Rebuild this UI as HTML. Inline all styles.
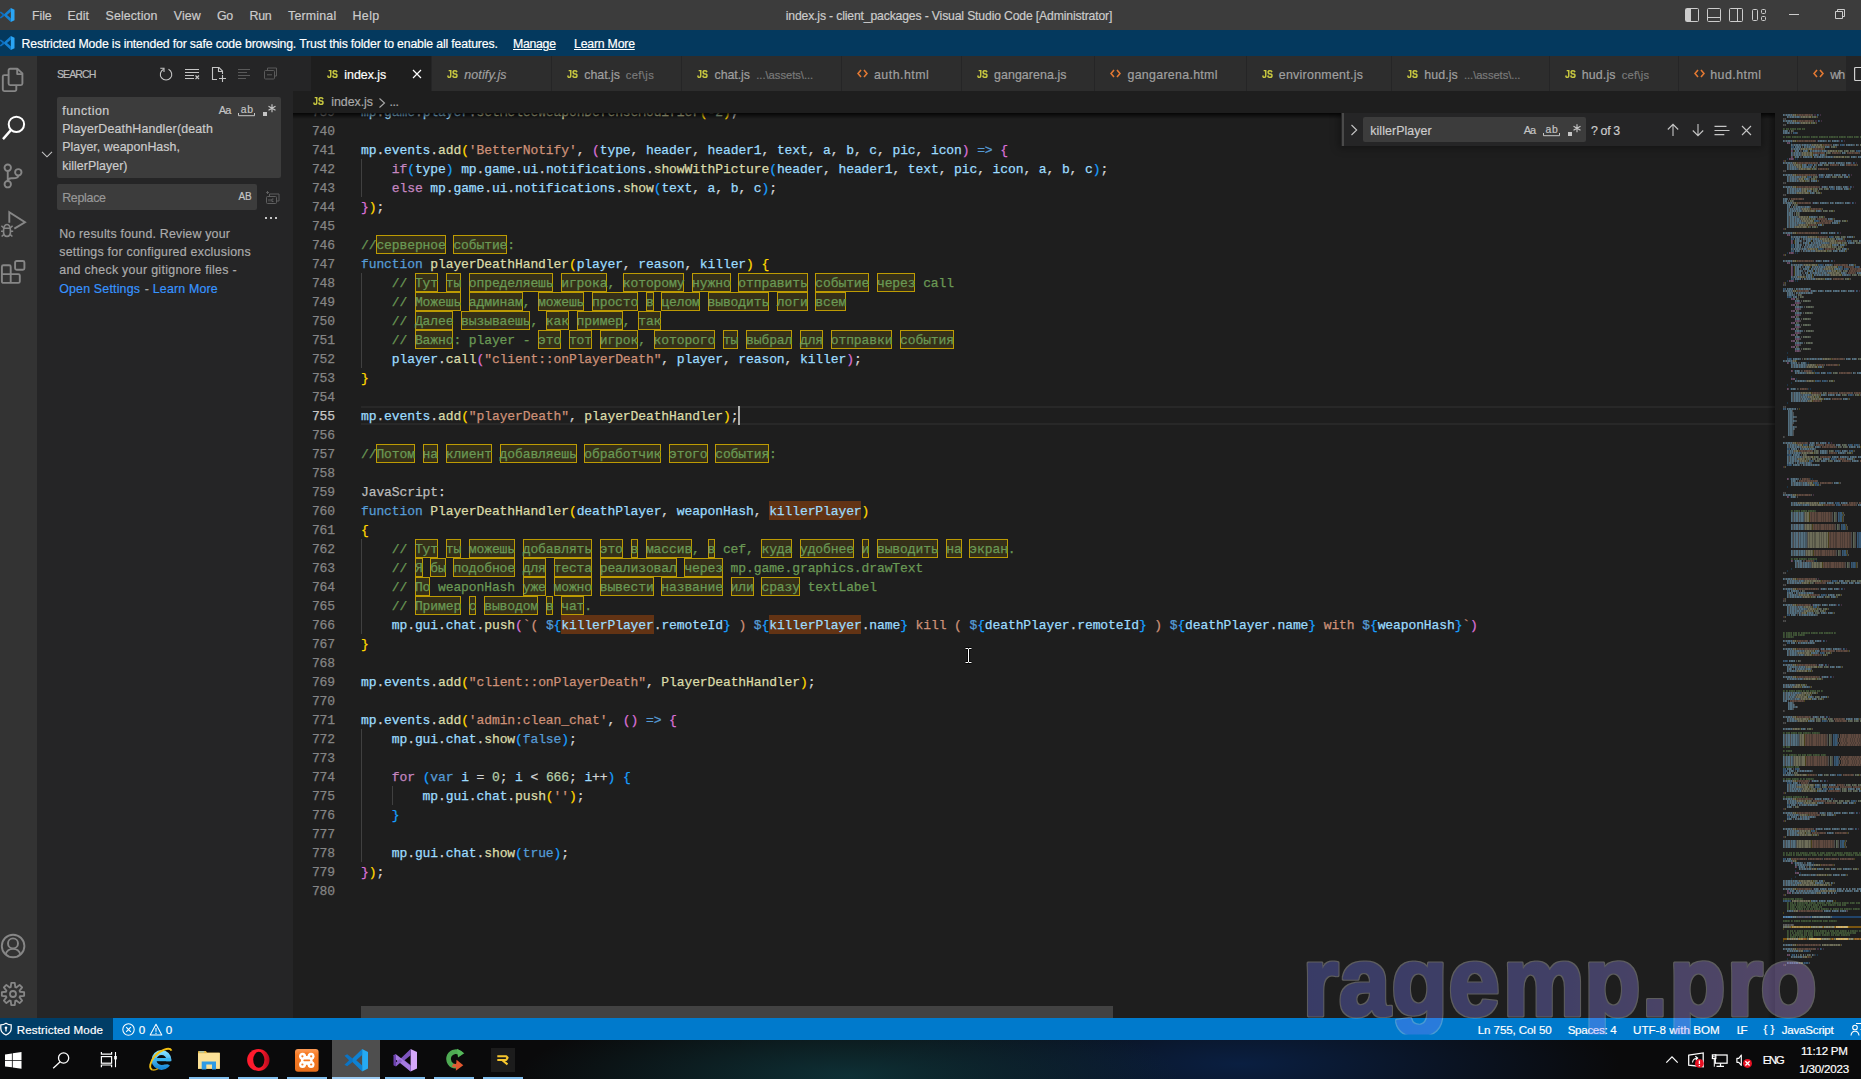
<!DOCTYPE html>
<html lang="en"><head><meta charset="utf-8"><title>index.js - client_packages - Visual Studio Code [Administrator]</title>
<style>
html,body{margin:0;padding:0;background:#1e1e1e;overflow:hidden;}
#root{position:relative;width:1861px;height:1079px;overflow:hidden;background:#1e1e1e;font-family:"Liberation Sans",sans-serif;}
.r{position:absolute;display:block;}
.t{position:absolute;white-space:pre;font-family:"Liberation Sans",sans-serif;-webkit-text-stroke:0.18px;}
.m{font-family:"Liberation Mono",monospace;}
.ln{position:absolute;left:0;height:19px;line-height:21px;-webkit-text-stroke:0.25px;white-space:pre;font-family:"Liberation Mono",monospace;font-size:13px;letter-spacing:-0.101px;color:#d4d4d4;}
.ln span{display:inline-block;height:19px;vertical-align:top;}
.u{box-sizing:border-box;border:1px solid #bd9b03;background:rgba(189,155,3,.15);margin:0 -1px;padding:0;}
.h{background:#623314;}
</style></head>
<body><div id="root">
<div class="r" style="left:0px;top:0px;width:1861px;height:30px;background:#3c3c3c;"></div>
<div class="r" style="left:0px;top:30px;width:1861px;height:26px;background:#04395e;"></div>
<div class="r" style="left:0px;top:56px;width:37px;height:962px;background:#333333;"></div>
<div class="r" style="left:37px;top:56px;width:256px;height:962px;background:#252526;"></div>
<div class="r" style="left:293px;top:56px;width:1568px;height:35px;background:#252526;"></div>
<div class="r" style="left:293px;top:91px;width:1568px;height:927px;background:#1e1e1e;"></div>
<div class="r" style="left:0px;top:1018px;width:1861px;height:22px;background:#007acc;"></div>
<div class="r" style="left:0px;top:1040px;width:1861px;height:39px;background:#0a0a0b;background:radial-gradient(ellipse 330px 70px at 850px 36px,rgba(14,50,56,.95),rgba(14,50,56,0) 100%),radial-gradient(ellipse 380px 80px at 1240px 24px,rgba(10,32,68,.95),rgba(10,32,68,0) 100%),#0a0a0b;"></div>
<svg class="r" style="left:-1px;top:7px;" width="16" height="16" viewBox="0 0 100 100"><path d="M74 6 L97 17 L97 83 L74 94 Z" fill="#2aa5f5"/><path d="M74 6 L27 50 L74 94 L74 70 L50 50 L74 30 Z" fill="#1480d3"/><path d="M33 44 L12 28 L3 33 L22 50 L3 67 L12 72 L33 56 Z" fill="#0f6fc0"/></svg>
<span class="t" style="left:32.00px;top:8px;font-size:12.4px;line-height:16px;color:#cccccc;letter-spacing:-0.077px;">File</span>
<span class="t" style="left:67.50px;top:8px;font-size:12.4px;line-height:16px;color:#cccccc;letter-spacing:0.044px;">Edit</span>
<span class="t" style="left:105.50px;top:8px;font-size:12.4px;line-height:16px;color:#cccccc;letter-spacing:0.124px;">Selection</span>
<span class="t" style="left:173.75px;top:8px;font-size:12.4px;line-height:16px;color:#cccccc;letter-spacing:0.116px;">View</span>
<span class="t" style="left:217.00px;top:8px;font-size:12.4px;line-height:16px;color:#cccccc;letter-spacing:-0.291px;">Go</span>
<span class="t" style="left:249.50px;top:8px;font-size:12.4px;line-height:16px;color:#cccccc;letter-spacing:-0.249px;">Run</span>
<span class="t" style="left:288.00px;top:8px;font-size:12.4px;line-height:16px;color:#cccccc;letter-spacing:0.199px;">Terminal</span>
<span class="t" style="left:352.50px;top:8px;font-size:12.4px;line-height:16px;color:#cccccc;letter-spacing:0.416px;">Help</span>
<span class="t" style="left:785.70px;top:8px;font-size:12.2px;line-height:16px;color:#cccccc;letter-spacing:-0.147px;">index.js - client_packages - Visual Studio Code [Administrator]</span>
<svg class="r" style="left:1684px;top:7px;" width="16" height="16" viewBox="0 0 16 16"><rect x="1.5" y="1.5" width="13" height="13" rx="1" fill="none" stroke="#cccccc" stroke-width="1"/><rect x="2" y="2" width="5" height="12" fill="#cccccc"/></svg>
<svg class="r" style="left:1705.5px;top:7px;" width="16" height="16" viewBox="0 0 16 16"><rect x="1.5" y="1.5" width="13" height="13" rx="1" fill="none" stroke="#cccccc" stroke-width="1"/><path d="M2 10.5H14" stroke="#cccccc" stroke-width="1"/></svg>
<svg class="r" style="left:1727.5px;top:7px;" width="16" height="16" viewBox="0 0 16 16"><rect x="1.5" y="1.5" width="13" height="13" rx="1" fill="none" stroke="#cccccc" stroke-width="1"/><path d="M9.5 2V14" stroke="#cccccc" stroke-width="1"/></svg>
<svg class="r" style="left:1750.5px;top:7px;" width="16" height="16" viewBox="0 0 16 16"><rect x="1.5" y="2.5" width="5" height="11" rx="1" fill="none" stroke="#cccccc" stroke-width="1"/><rect x="10.5" y="2.5" width="4" height="4" rx="1" fill="none" stroke="#cccccc" stroke-width="1"/><rect x="10.5" y="9.5" width="4" height="4" rx="1" fill="none" stroke="#cccccc" stroke-width="1"/></svg>
<div class="r" style="left:1789px;top:14px;width:10px;height:1px;background:#cccccc;"></div>
<svg class="r" style="left:1834px;top:8px;" width="12" height="12" viewBox="0 0 12 12"><path d="M1.5 3.5h7v7h-7z M3.5 3.5v-2h7v7h-2" fill="none" stroke="#cccccc" stroke-width="1"/></svg>
<svg class="r" style="left:-1px;top:35px;" width="16" height="16" viewBox="0 0 100 100"><path d="M74 6 L97 17 L97 83 L74 94 Z" fill="#2aa5f5"/><path d="M74 6 L27 50 L74 94 L74 70 L50 50 L74 30 Z" fill="#1480d3"/><path d="M33 44 L12 28 L3 33 L22 50 L3 67 L12 72 L33 56 Z" fill="#0f6fc0"/></svg>
<span class="t" style="left:21.50px;top:36px;font-size:12.3px;line-height:16px;color:#ffffff;letter-spacing:-0.164px;">Restricted Mode is intended for safe code browsing. Trust this folder to enable all features.</span>
<span class="t" style="left:513.00px;top:36px;font-size:12.3px;line-height:16px;color:#ffffff;letter-spacing:-0.290px;text-decoration:underline;text-underline-offset:1px;">Manage</span>
<span class="t" style="left:574.00px;top:36px;font-size:12.3px;line-height:16px;color:#ffffff;letter-spacing:-0.211px;text-decoration:underline;text-underline-offset:1px;">Learn More</span>
<div class="r" style="left:311px;top:56px;width:120px;height:35px;background:#1e1e1e;"></div>
<span class="t" style="left:326.70px;top:67px;font-size:11px;line-height:14px;color:#cbcb41;font-weight:700;transform:scaleX(0.810);transform-origin:0 50%;">JS</span>
<span class="t" style="left:344.25px;top:67px;font-size:12.4px;line-height:16px;color:#ffffff;letter-spacing:-0.006px;">index.js</span>
<div class="r" style="left:432px;top:56px;width:119px;height:35px;background:#2d2d2d;"></div>
<span class="t" style="left:446.70px;top:67px;font-size:11px;line-height:14px;color:#cbcb41;font-weight:700;transform:scaleX(0.810);transform-origin:0 50%;">JS</span>
<span class="t" style="left:464.25px;top:67px;font-size:12.4px;line-height:16px;color:#a0a0a0;letter-spacing:0.142px;font-style:italic;">notify.js</span>
<div class="r" style="left:552px;top:56px;width:129px;height:35px;background:#2d2d2d;"></div>
<span class="t" style="left:566.70px;top:67px;font-size:11px;line-height:14px;color:#cbcb41;font-weight:700;transform:scaleX(0.810);transform-origin:0 50%;">JS</span>
<span class="t" style="left:584.25px;top:67px;font-size:12.4px;line-height:16px;color:#a0a0a0;letter-spacing:-0.015px;">chat.js</span>
<span class="t" style="left:625.75px;top:68px;font-size:11.2px;line-height:15px;color:#7b7b7b;letter-spacing:0.372px;">cef\js</span>
<div class="r" style="left:682px;top:56px;width:159px;height:35px;background:#2d2d2d;"></div>
<span class="t" style="left:696.70px;top:67px;font-size:11px;line-height:14px;color:#cbcb41;font-weight:700;transform:scaleX(0.810);transform-origin:0 50%;">JS</span>
<span class="t" style="left:714.50px;top:67px;font-size:12.4px;line-height:16px;color:#a0a0a0;letter-spacing:-0.056px;">chat.js</span>
<span class="t" style="left:756.25px;top:68px;font-size:11.2px;line-height:15px;color:#7b7b7b;letter-spacing:-0.020px;">...\assets\...</span>
<div class="r" style="left:842px;top:56px;width:119px;height:35px;background:#2d2d2d;"></div>
<svg class="r" style="left:857.0px;top:69.0px;" width="11" height="9" viewBox="0 0 11 9"><path d="M4 1 L1 4.5 L4 8 M7 1 L10 4.5 L7 8" fill="none" stroke="#e37933" stroke-width="1.6"/></svg>
<span class="t" style="left:874.00px;top:67px;font-size:12.4px;line-height:16px;color:#a0a0a0;letter-spacing:0.468px;">auth.html</span>
<div class="r" style="left:962px;top:56px;width:132px;height:35px;background:#2d2d2d;"></div>
<span class="t" style="left:977.20px;top:67px;font-size:11px;line-height:14px;color:#cbcb41;font-weight:700;transform:scaleX(0.810);transform-origin:0 50%;">JS</span>
<span class="t" style="left:994.00px;top:67px;font-size:12.4px;line-height:16px;color:#a0a0a0;letter-spacing:0.073px;">gangarena.js</span>
<div class="r" style="left:1095px;top:56px;width:151px;height:35px;background:#2d2d2d;"></div>
<svg class="r" style="left:1110.0px;top:69.0px;" width="11" height="9" viewBox="0 0 11 9"><path d="M4 1 L1 4.5 L4 8 M7 1 L10 4.5 L7 8" fill="none" stroke="#e37933" stroke-width="1.6"/></svg>
<span class="t" style="left:1127.50px;top:67px;font-size:12.4px;line-height:16px;color:#a0a0a0;letter-spacing:0.295px;">gangarena.html</span>
<div class="r" style="left:1247px;top:56px;width:144px;height:35px;background:#2d2d2d;"></div>
<span class="t" style="left:1262.20px;top:67px;font-size:11px;line-height:14px;color:#cbcb41;font-weight:700;transform:scaleX(0.810);transform-origin:0 50%;">JS</span>
<span class="t" style="left:1278.75px;top:67px;font-size:12.4px;line-height:16px;color:#a0a0a0;letter-spacing:0.278px;">environment.js</span>
<div class="r" style="left:1392px;top:56px;width:157px;height:35px;background:#2d2d2d;"></div>
<span class="t" style="left:1407.20px;top:67px;font-size:11px;line-height:14px;color:#cbcb41;font-weight:700;transform:scaleX(0.810);transform-origin:0 50%;">JS</span>
<span class="t" style="left:1424.25px;top:67px;font-size:12.4px;line-height:16px;color:#a0a0a0;letter-spacing:0.082px;">hud.js</span>
<span class="t" style="left:1464.00px;top:68px;font-size:11.2px;line-height:15px;color:#7b7b7b;letter-spacing:-0.059px;">...\assets\...</span>
<div class="r" style="left:1550px;top:56px;width:128px;height:35px;background:#2d2d2d;"></div>
<span class="t" style="left:1565.20px;top:67px;font-size:11px;line-height:14px;color:#cbcb41;font-weight:700;transform:scaleX(0.810);transform-origin:0 50%;">JS</span>
<span class="t" style="left:1581.75px;top:67px;font-size:12.4px;line-height:16px;color:#a0a0a0;letter-spacing:0.132px;">hud.js</span>
<span class="t" style="left:1621.75px;top:68px;font-size:11.2px;line-height:15px;color:#7b7b7b;letter-spacing:0.222px;">cef\js</span>
<div class="r" style="left:1679px;top:56px;width:118px;height:35px;background:#2d2d2d;"></div>
<svg class="r" style="left:1693.5px;top:69.0px;" width="11" height="9" viewBox="0 0 11 9"><path d="M4 1 L1 4.5 L4 8 M7 1 L10 4.5 L7 8" fill="none" stroke="#e37933" stroke-width="1.6"/></svg>
<span class="t" style="left:1710.25px;top:67px;font-size:12.4px;line-height:16px;color:#a0a0a0;letter-spacing:0.456px;">hud.html</span>
<div class="r" style="left:1798px;top:56px;width:63px;height:35px;background:#2d2d2d;"></div>
<svg class="r" style="left:1813.0px;top:69.0px;" width="11" height="9" viewBox="0 0 11 9"><path d="M4 1 L1 4.5 L4 8 M7 1 L10 4.5 L7 8" fill="none" stroke="#e37933" stroke-width="1.6"/></svg>
<span class="t" style="left:1830.25px;top:67px;font-size:12.4px;line-height:16px;color:#a0a0a0;letter-spacing:-0.851px;">wh</span>
<svg class="r" style="left:412.2px;top:69.2px;" width="10" height="10" viewBox="0 0 10 10"><path d="M1 1 L9 9 M9 1 L1 9" stroke="#ffffff" stroke-width="1.2" fill="none"/></svg>
<div class="r" style="left:1845.5px;top:56px;width:16px;height:35px;background:#252526;"></div>
<svg class="r" style="left:1854px;top:66px;" width="8" height="16" viewBox="0 0 8 16"><rect x="0.6" y="1.5" width="12" height="13" rx="1" fill="none" stroke="#d0d0d0" stroke-width="1.2"/></svg>
<span class="t" style="left:313.45px;top:94px;font-size:11px;line-height:14px;color:#cbcb41;font-weight:700;transform:scaleX(0.810);transform-origin:0 50%;">JS</span>
<span class="t" style="left:331.25px;top:94px;font-size:12.4px;line-height:16px;color:#a9a9a9;letter-spacing:-0.042px;">index.js</span>
<svg class="r" style="left:378px;top:97px;" width="8" height="12" viewBox="0 0 8 12"><path d="M1.5 1.5 L6.5 6 L1.5 10.5" fill="none" stroke="#a9a9a9" stroke-width="1.1"/></svg>
<span class="t" style="left:389.50px;top:94px;font-size:12.4px;line-height:16px;color:#a9a9a9;letter-spacing:-0.418px;">...</span>
<svg class="r" style="left:1px;top:68px;overflow:visible;" width="26" height="26" viewBox="0 0 26 26"><g fill="none" stroke="#868686" stroke-width="1.9" stroke-linejoin="round"><path d="M7.600 6.500V2.300a1.500 1.500 0 0 1 1.500-1.500H16.300L21.400 5.400V15.600a1.500 1.500 0 0 1-1.500 1.500H9.100a1.500 1.500 0 0 1-1.500-1.500V6.500"/><path d="M16.200 .8V6.100H21.400"/><path d="M7.600 7.100H3.300a1.500 1.500 0 0 0-1.500 1.500V21.600a1.500 1.500 0 0 0 1.500 1.500H13.800a1.500 1.500 0 0 0 1.500-1.500V17.100"/></g></svg>
<svg class="r" style="left:1px;top:116px;overflow:visible;" width="26" height="26" viewBox="0 0 26 26"><g fill="none" stroke="#ffffff" stroke-width="1.9" stroke-linejoin="round"><circle cx="15.400" cy="8.350" r="7.700" stroke-width="2"/><path d="M10.100 13.900L2 23.100" stroke-width="2.400"/></g></svg>
<svg class="r" style="left:1px;top:164px;overflow:visible;" width="26" height="26" viewBox="0 0 26 26"><g fill="none" stroke="#868686" stroke-width="1.9" stroke-linejoin="round"><circle cx="6.750" cy="3.700" r="3.200"/><circle cx="6.750" cy="20.200" r="3.200"/><circle cx="17.300" cy="8.300" r="3.200"/><path d="M6.750 6.900V17"/><path d="M17.300 11.500C17.300 14.300 14.500 14.300 12 14.300H10.500C8.500 14.300 6.750 15.300 6.750 17"/></g></svg>
<svg class="r" style="left:1px;top:212px;overflow:visible;" width="26" height="26" viewBox="0 0 26 26"><g fill="none" stroke="#868686" stroke-width="1.9" stroke-linejoin="round"><path d="M8.300 10.700V.300L24 10.200L13.300 16.600" stroke-linejoin="miter"/><path d="M2.500 19.500c0-4.500 1.300-7 3.500-7s3.500 2.500 3.500 7c0 3-1.500 4.900-3.500 4.900s-3.500-1.900-3.500-4.900z" stroke-width="1.700"/><path d="M2.700 16.300H9.300 M2.500 15.800L.400 13.700 M9.500 15.800L11.600 13.700 M2.400 19.200H0 M9.600 19.200H12.200 M3 22.300L.600 24.500 M9 22.300L11.400 24.500" stroke-width="1.600"/></g></svg>
<svg class="r" style="left:1px;top:260px;overflow:visible;" width="26" height="26" viewBox="0 0 26 26"><g fill="none" stroke="#868686" stroke-width="1.9" stroke-linejoin="round"><rect x="14.100" y="1" width="9.300" height="8.700" rx="1.500"/><path d="M.900 6.700a1.500 1.500 0 0 1 1.500-1.500H8.200a1.500 1.500 0 0 1 1.500 1.500V14.100H17.300a1.500 1.500 0 0 1 1.500 1.500V21.400a1.500 1.500 0 0 1-1.500 1.500H2.400a1.500 1.500 0 0 1-1.500-1.500z"/><path d="M.900 14.100H9.700V22.900"/></g></svg>
<svg class="r" style="left:1px;top:934px;overflow:visible;" width="26" height="26" viewBox="0 0 26 26"><g fill="none" stroke="#868686" stroke-width="1.9" stroke-linejoin="round"><circle cx="12.100" cy="12" r="11.300"/><circle cx="12" cy="9.400" r="5"/><path d="M4.600 20.300C5.600 17 8.300 14.900 12 14.900s6.400 2.100 7.400 5.400"/></g></svg>
<svg class="r" style="left:1px;top:982px;overflow:visible;" width="26" height="26" viewBox="0 0 26 26"><g fill="none" stroke="#868686" stroke-width="1.9" stroke-linejoin="round"><path d="M23.16 10.23 L23.16 13.77 L18.94 14.26 L18.50 15.31 L21.14 18.64 L18.64 21.14 L15.31 18.50 L14.26 18.94 L13.77 23.16 L10.23 23.16 L9.74 18.94 L8.69 18.50 L5.36 21.14 L2.86 18.64 L5.50 15.31 L5.06 14.26 L0.84 13.77 L0.84 10.23 L5.06 9.74 L5.50 8.69 L2.86 5.36 L5.36 2.86 L8.69 5.50 L9.74 5.06 L10.23 0.84 L13.77 0.84 L14.26 5.06 L15.31 5.50 L18.64 2.86 L21.14 5.36 L18.50 8.69 L18.94 9.74Z" stroke-width="1.800"/><circle cx="12" cy="12" r="3" stroke-width="1.800"/></g></svg>
<span class="t" style="left:57.00px;top:67px;font-size:10.6px;line-height:14px;color:#bbbbbb;letter-spacing:-0.955px;">SEARCH</span>
<svg class="r" style="left:158px;top:66px;" width="16" height="16" viewBox="0 0 16 16"><g fill="none" stroke="#c5c5c5" stroke-width="1.1"><path d="M5.600 3.200A5.700 5.700 0 1 0 10.500 3.200"/><path d="M2.300 2.200h3.700v3.700"/></g></svg>
<svg class="r" style="left:184px;top:66px;" width="16" height="16" viewBox="0 0 16 16"><g fill="none" stroke="#c5c5c5" stroke-width="1.1"><path d="M1 3.500h14 M1 6.500h14 M1 9.500h9 M1 12.500h9"/><path d="M11.500 9.500l3.500 3.500 M15 9.500l-3.500 3.500"/></g></svg>
<svg class="r" style="left:211px;top:66px;" width="16" height="16" viewBox="0 0 16 16"><g fill="none" stroke="#c5c5c5" stroke-width="1.1"><path d="M6 13.500H1.500V1.500h6.500l3.500 3.500v3"/><path d="M7.500 1.500v4h4"/><path d="M11.500 9v7 M8 12.500h7"/></g></svg>
<svg class="r" style="left:237px;top:66px;" width="16" height="16" viewBox="0 0 16 16"><g fill="none" stroke="#5a5a5a" stroke-width="1"><path d="M1 3.500h12 M1 6.500h9 M1 9.500h12 M1 12.500h8"/></g></svg>
<svg class="r" style="left:263px;top:66px;" width="16" height="16" viewBox="0 0 16 16"><g fill="none" stroke="#5a5a5a" stroke-width="1"><path d="M4.500 4.500v-2.500h9v8h-2.500"/><rect x="1.500" y="4.500" width="10" height="8.500" rx="1"/><path d="M4 8.800h5"/></g></svg>
<div class="r" style="left:57px;top:97px;width:224px;height:81px;background:#3c3c3c;border-radius:2px;"></div>
<span class="t" style="left:62.20px;top:103px;font-size:12.4px;line-height:16px;color:#cccccc;letter-spacing:0.524px;">function</span>
<span class="t" style="left:62.20px;top:121px;font-size:12.4px;line-height:16px;color:#cccccc;letter-spacing:0.173px;">PlayerDeathHandler(death</span>
<span class="t" style="left:62.20px;top:139px;font-size:12.4px;line-height:16px;color:#cccccc;letter-spacing:0.034px;">Player, weaponHash,</span>
<span class="t" style="left:62.20px;top:158px;font-size:12.4px;line-height:16px;color:#cccccc;letter-spacing:0.044px;">killerPlayer)</span>
<span class="t" style="left:218.80px;top:103px;font-size:11px;line-height:14px;color:#c5c5c5;letter-spacing:-0.955px;">Aa</span>
<span class="t" style="left:240.70px;top:103px;font-size:10.4px;line-height:14px;color:#c5c5c5;letter-spacing:0.732px;">ab</span>
<svg class="r" style="left:238.10000000000002px;top:112.8px;" width="18" height="4" viewBox="0 0 18 4"><path d="M.5 0v2.700h16v-2.700" fill="none" stroke="#c5c5c5" stroke-width="1"/></svg>
<div class="r" style="left:262.7px;top:112px;width:4.5px;height:4px;background:#c5c5c5;"></div>
<svg class="r" style="left:267.6px;top:103.8px;" width="8" height="9" viewBox="0 0 8 9"><path d="M4 .3v8 M.5 2.300l7 4 M7.500 2.300l-7 4" fill="none" stroke="#c5c5c5" stroke-width="1.150"/></svg>
<svg class="r" style="left:41px;top:150px;" width="12" height="9" viewBox="0 0 12 9"><path d="M1 1.800 L6 6.800 L11 1.800" fill="none" stroke="#c5c5c5" stroke-width="1.1"/></svg>
<div class="r" style="left:57px;top:184px;width:200px;height:26px;background:#3c3c3c;border-radius:2px;"></div>
<span class="t" style="left:62.20px;top:190px;font-size:12.4px;line-height:16px;color:#989898;letter-spacing:-0.283px;">Replace</span>
<span class="t" style="left:238.60px;top:190px;font-size:10px;line-height:13px;color:#c5c5c5;letter-spacing:-0.340px;">AB</span>
<svg class="r" style="left:265px;top:189px;" width="16" height="16" viewBox="0 0 16 16"><g fill="none" stroke="#5f5f5f" stroke-width="1"><rect x="1.500" y="7.500" width="10" height="7" rx="1"/><path d="M4.500 7.500v-2.500h9.500v7h-2.500"/><path d="M4 3.500h-2.500 M3 2l-1.500 1.500 1.500 1.500"/><path d="M4 10v2.500 M6 10v2.500 M8.500 10h-1.500v2.500h1.500"/></g></svg>
<div class="r" style="left:264.5px;top:217px;width:2.2px;height:2.2px;background:#c5c5c5;"></div>
<div class="r" style="left:269.5px;top:217px;width:2.2px;height:2.2px;background:#c5c5c5;"></div>
<div class="r" style="left:274.5px;top:217px;width:2.2px;height:2.2px;background:#c5c5c5;"></div>
<span class="t" style="left:59.20px;top:226px;font-size:12.4px;line-height:16px;color:#ababab;letter-spacing:0.193px;">No results found. Review your</span>
<span class="t" style="left:59.20px;top:244px;font-size:12.4px;line-height:16px;color:#ababab;letter-spacing:0.250px;">settings for configured exclusions</span>
<span class="t" style="left:59.20px;top:262px;font-size:12.4px;line-height:16px;color:#ababab;letter-spacing:0.301px;">and check your gitignore files -</span>
<span class="t" style="left:59.20px;top:281px;font-size:12.4px;line-height:16px;color:#3794ff;letter-spacing:0.185px;">Open Settings</span>
<span class="t" style="left:144.70px;top:281px;font-size:12.4px;line-height:16px;color:#ababab;">-</span>
<span class="t" style="left:152.80px;top:281px;font-size:12.4px;line-height:16px;color:#3794ff;letter-spacing:0.177px;">Learn More</span>
<div class="r" id="ed" style="left:293px;top:113px;width:1482px;height:905px;overflow:hidden;">
<div class="r" style="left:68px;top:293px;width:1414px;height:19px;box-sizing:border-box;border-top:2px solid #282828;border-bottom:2px solid #282828;"></div>
<div class="r" style="left:68.0px;top:46px;width:1px;height:38px;background:#404040;"></div>
<div class="r" style="left:68.0px;top:160px;width:1px;height:95px;background:#404040;"></div>
<div class="r" style="left:68.0px;top:426px;width:1px;height:95px;background:#404040;"></div>
<div class="r" style="left:68.0px;top:616px;width:1px;height:133px;background:#404040;"></div>
<div class="r" style="left:98.8px;top:673px;width:1px;height:19px;background:#404040;"></div>
<span class="ln" style="left:18.90px;top:-11px;color:#858585">739</span>
<div class="ln" style="left:68px;top:-11px;"><span style="color:#9cdcfe">mp</span>.<span style="color:#9cdcfe">game</span>.<span style="color:#9cdcfe">player</span>.<span style="color:#dcdcaa">setMeleeWeaponDefenseModifier</span><span style="color:#ffd700">(</span>-<span style="color:#b5cea8">2</span><span style="color:#ffd700">)</span>;</div>
<span class="ln" style="left:18.90px;top:8px;color:#858585">740</span>
<span class="ln" style="left:18.90px;top:27px;color:#858585">741</span>
<div class="ln" style="left:68px;top:27px;"><span style="color:#9cdcfe">mp</span>.<span style="color:#9cdcfe">events</span>.<span style="color:#dcdcaa">add</span><span style="color:#ffd700">(</span><span style="color:#ce9178">'BetterNotify'</span>, <span style="color:#da70d6">(</span><span style="color:#9cdcfe">type</span>, <span style="color:#9cdcfe">header</span>, <span style="color:#9cdcfe">header1</span>, <span style="color:#9cdcfe">text</span>, <span style="color:#9cdcfe">a</span>, <span style="color:#9cdcfe">b</span>, <span style="color:#9cdcfe">c</span>, <span style="color:#9cdcfe">pic</span>, <span style="color:#9cdcfe">icon</span><span style="color:#da70d6">)</span> <span style="color:#569cd6">=&gt;</span> <span style="color:#da70d6">{</span></div>
<span class="ln" style="left:18.90px;top:46px;color:#858585">742</span>
<div class="ln" style="left:68px;top:46px;">    <span style="color:#c586c0">if</span><span style="color:#179fff">(</span><span style="color:#9cdcfe">type</span><span style="color:#179fff">)</span> <span style="color:#9cdcfe">mp</span>.<span style="color:#9cdcfe">game</span>.<span style="color:#9cdcfe">ui</span>.<span style="color:#9cdcfe">notifications</span>.<span style="color:#dcdcaa">showWithPicture</span><span style="color:#179fff">(</span><span style="color:#9cdcfe">header</span>, <span style="color:#9cdcfe">header1</span>, <span style="color:#9cdcfe">text</span>, <span style="color:#9cdcfe">pic</span>, <span style="color:#9cdcfe">icon</span>, <span style="color:#9cdcfe">a</span>, <span style="color:#9cdcfe">b</span>, <span style="color:#9cdcfe">c</span><span style="color:#179fff">)</span>;</div>
<span class="ln" style="left:18.90px;top:65px;color:#858585">743</span>
<div class="ln" style="left:68px;top:65px;">    <span style="color:#c586c0">else</span> <span style="color:#9cdcfe">mp</span>.<span style="color:#9cdcfe">game</span>.<span style="color:#9cdcfe">ui</span>.<span style="color:#9cdcfe">notifications</span>.<span style="color:#dcdcaa">show</span><span style="color:#179fff">(</span><span style="color:#9cdcfe">text</span>, <span style="color:#9cdcfe">a</span>, <span style="color:#9cdcfe">b</span>, <span style="color:#9cdcfe">c</span><span style="color:#179fff">)</span>;</div>
<span class="ln" style="left:18.90px;top:84px;color:#858585">744</span>
<div class="ln" style="left:68px;top:84px;"><span style="color:#da70d6">}</span><span style="color:#ffd700">)</span>;</div>
<span class="ln" style="left:18.90px;top:103px;color:#858585">745</span>
<span class="ln" style="left:18.90px;top:122px;color:#858585">746</span>
<div class="r u" style="left:83.40px;top:122px;width:69.30px;height:19px;margin:0"></div>
<div class="r u" style="left:160.40px;top:122px;width:53.90px;height:19px;margin:0"></div>
<div class="ln" style="left:68px;top:122px;"><span style="color:#6a9955">//серверное событие:</span></div>
<span class="ln" style="left:18.90px;top:141px;color:#858585">747</span>
<div class="ln" style="left:68px;top:141px;"><span style="color:#569cd6">function</span> <span style="color:#dcdcaa">playerDeathHandler</span><span style="color:#ffd700">(</span><span style="color:#9cdcfe">player</span>, <span style="color:#9cdcfe">reason</span>, <span style="color:#9cdcfe">killer</span><span style="color:#ffd700">)</span> <span style="color:#ffd700">{</span></div>
<span class="ln" style="left:18.90px;top:160px;color:#858585">748</span>
<div class="r u" style="left:121.90px;top:160px;width:23.10px;height:19px;margin:0"></div>
<div class="r u" style="left:152.70px;top:160px;width:15.40px;height:19px;margin:0"></div>
<div class="r u" style="left:175.80px;top:160px;width:84.70px;height:19px;margin:0"></div>
<div class="r u" style="left:268.20px;top:160px;width:46.20px;height:19px;margin:0"></div>
<div class="r u" style="left:329.80px;top:160px;width:61.60px;height:19px;margin:0"></div>
<div class="r u" style="left:399.10px;top:160px;width:38.50px;height:19px;margin:0"></div>
<div class="r u" style="left:445.30px;top:160px;width:69.30px;height:19px;margin:0"></div>
<div class="r u" style="left:522.30px;top:160px;width:53.90px;height:19px;margin:0"></div>
<div class="r u" style="left:583.90px;top:160px;width:38.50px;height:19px;margin:0"></div>
<div class="ln" style="left:68px;top:160px;">    <span style="color:#6a9955">// Тут ты определяешь игрока, которому нужно отправить событие через call</span></div>
<span class="ln" style="left:18.90px;top:179px;color:#858585">749</span>
<div class="r u" style="left:121.90px;top:179px;width:46.20px;height:19px;margin:0"></div>
<div class="r u" style="left:175.80px;top:179px;width:53.90px;height:19px;margin:0"></div>
<div class="r u" style="left:245.10px;top:179px;width:46.20px;height:19px;margin:0"></div>
<div class="r u" style="left:299.00px;top:179px;width:46.20px;height:19px;margin:0"></div>
<div class="r u" style="left:352.90px;top:179px;width:7.70px;height:19px;margin:0"></div>
<div class="r u" style="left:368.30px;top:179px;width:38.50px;height:19px;margin:0"></div>
<div class="r u" style="left:414.50px;top:179px;width:61.60px;height:19px;margin:0"></div>
<div class="r u" style="left:483.80px;top:179px;width:30.80px;height:19px;margin:0"></div>
<div class="r u" style="left:522.30px;top:179px;width:30.80px;height:19px;margin:0"></div>
<div class="ln" style="left:68px;top:179px;">    <span style="color:#6a9955">// Можешь админам, можешь просто в целом выводить логи всем</span></div>
<span class="ln" style="left:18.90px;top:198px;color:#858585">750</span>
<div class="r u" style="left:121.90px;top:198px;width:38.50px;height:19px;margin:0"></div>
<div class="r u" style="left:168.10px;top:198px;width:69.30px;height:19px;margin:0"></div>
<div class="r u" style="left:252.80px;top:198px;width:23.10px;height:19px;margin:0"></div>
<div class="r u" style="left:283.60px;top:198px;width:46.20px;height:19px;margin:0"></div>
<div class="r u" style="left:345.20px;top:198px;width:23.10px;height:19px;margin:0"></div>
<div class="ln" style="left:68px;top:198px;">    <span style="color:#6a9955">// Далее вызываешь, как пример, так</span></div>
<span class="ln" style="left:18.90px;top:217px;color:#858585">751</span>
<div class="r u" style="left:121.90px;top:217px;width:38.50px;height:19px;margin:0"></div>
<div class="r u" style="left:245.10px;top:217px;width:23.10px;height:19px;margin:0"></div>
<div class="r u" style="left:275.90px;top:217px;width:23.10px;height:19px;margin:0"></div>
<div class="r u" style="left:306.70px;top:217px;width:38.50px;height:19px;margin:0"></div>
<div class="r u" style="left:360.60px;top:217px;width:61.60px;height:19px;margin:0"></div>
<div class="r u" style="left:429.90px;top:217px;width:15.40px;height:19px;margin:0"></div>
<div class="r u" style="left:453.00px;top:217px;width:46.20px;height:19px;margin:0"></div>
<div class="r u" style="left:506.90px;top:217px;width:23.10px;height:19px;margin:0"></div>
<div class="r u" style="left:537.70px;top:217px;width:61.60px;height:19px;margin:0"></div>
<div class="r u" style="left:607.00px;top:217px;width:53.90px;height:19px;margin:0"></div>
<div class="ln" style="left:68px;top:217px;">    <span style="color:#6a9955">// Важно: player - это тот игрок, которого ты выбрал для отправки события</span></div>
<span class="ln" style="left:18.90px;top:236px;color:#858585">752</span>
<div class="ln" style="left:68px;top:236px;">    <span style="color:#9cdcfe">player</span>.<span style="color:#dcdcaa">call</span><span style="color:#da70d6">(</span><span style="color:#ce9178">"client::onPlayerDeath"</span>, <span style="color:#9cdcfe">player</span>, <span style="color:#9cdcfe">reason</span>, <span style="color:#9cdcfe">killer</span><span style="color:#da70d6">)</span>;</div>
<span class="ln" style="left:18.90px;top:255px;color:#858585">753</span>
<div class="ln" style="left:68px;top:255px;"><span style="color:#ffd700">}</span></div>
<span class="ln" style="left:18.90px;top:274px;color:#858585">754</span>
<span class="ln" style="left:18.90px;top:293px;color:#c6c6c6">755</span>
<div class="ln" style="left:68px;top:293px;"><span style="color:#9cdcfe">mp</span>.<span style="color:#9cdcfe">events</span>.<span style="color:#dcdcaa">add</span><span style="color:#ffd700">(</span><span style="color:#ce9178">"playerDeath"</span>, <span style="color:#dcdcaa">playerDeathHandler</span><span style="color:#ffd700">)</span>;</div>
<span class="ln" style="left:18.90px;top:312px;color:#858585">756</span>
<span class="ln" style="left:18.90px;top:331px;color:#858585">757</span>
<div class="r u" style="left:83.40px;top:331px;width:38.50px;height:19px;margin:0"></div>
<div class="r u" style="left:129.60px;top:331px;width:15.40px;height:19px;margin:0"></div>
<div class="r u" style="left:152.70px;top:331px;width:46.20px;height:19px;margin:0"></div>
<div class="r u" style="left:206.60px;top:331px;width:77.00px;height:19px;margin:0"></div>
<div class="r u" style="left:291.30px;top:331px;width:77.00px;height:19px;margin:0"></div>
<div class="r u" style="left:376.00px;top:331px;width:38.50px;height:19px;margin:0"></div>
<div class="r u" style="left:422.20px;top:331px;width:53.90px;height:19px;margin:0"></div>
<div class="ln" style="left:68px;top:331px;"><span style="color:#6a9955">//Потом на клиент добавляешь обработчик этого события:</span></div>
<span class="ln" style="left:18.90px;top:350px;color:#858585">758</span>
<span class="ln" style="left:18.90px;top:369px;color:#858585">759</span>
<div class="ln" style="left:68px;top:369px;"><span style="color:#bcbcbc">JavaScript</span>:</div>
<span class="ln" style="left:18.90px;top:388px;color:#858585">760</span>
<div class="r h" style="left:476.10px;top:388px;width:92.40px;height:19px;"></div>
<div class="ln" style="left:68px;top:388px;"><span style="color:#569cd6">function</span> <span style="color:#dcdcaa">PlayerDeathHandler</span><span style="color:#ffd700">(</span><span style="color:#9cdcfe">deathPlayer</span>, <span style="color:#9cdcfe">weaponHash</span>, <span style="color:#9cdcfe">killerPlayer</span><span style="color:#ffd700">)</span></div>
<span class="ln" style="left:18.90px;top:407px;color:#858585">761</span>
<div class="ln" style="left:68px;top:407px;"><span style="color:#ffd700">{</span></div>
<span class="ln" style="left:18.90px;top:426px;color:#858585">762</span>
<div class="r u" style="left:121.90px;top:426px;width:23.10px;height:19px;margin:0"></div>
<div class="r u" style="left:152.70px;top:426px;width:15.40px;height:19px;margin:0"></div>
<div class="r u" style="left:175.80px;top:426px;width:46.20px;height:19px;margin:0"></div>
<div class="r u" style="left:229.70px;top:426px;width:69.30px;height:19px;margin:0"></div>
<div class="r u" style="left:306.70px;top:426px;width:23.10px;height:19px;margin:0"></div>
<div class="r u" style="left:337.50px;top:426px;width:7.70px;height:19px;margin:0"></div>
<div class="r u" style="left:352.90px;top:426px;width:46.20px;height:19px;margin:0"></div>
<div class="r u" style="left:414.50px;top:426px;width:7.70px;height:19px;margin:0"></div>
<div class="r u" style="left:468.40px;top:426px;width:30.80px;height:19px;margin:0"></div>
<div class="r u" style="left:506.90px;top:426px;width:53.90px;height:19px;margin:0"></div>
<div class="r u" style="left:568.50px;top:426px;width:7.70px;height:19px;margin:0"></div>
<div class="r u" style="left:583.90px;top:426px;width:61.60px;height:19px;margin:0"></div>
<div class="r u" style="left:653.20px;top:426px;width:15.40px;height:19px;margin:0"></div>
<div class="r u" style="left:676.30px;top:426px;width:38.50px;height:19px;margin:0"></div>
<div class="ln" style="left:68px;top:426px;">    <span style="color:#6a9955">// Тут ты можешь добавлять это в массив, в cef, куда удобнее и выводить на экран.</span></div>
<span class="ln" style="left:18.90px;top:445px;color:#858585">763</span>
<div class="r u" style="left:121.90px;top:445px;width:7.70px;height:19px;margin:0"></div>
<div class="r u" style="left:137.30px;top:445px;width:15.40px;height:19px;margin:0"></div>
<div class="r u" style="left:160.40px;top:445px;width:61.60px;height:19px;margin:0"></div>
<div class="r u" style="left:229.70px;top:445px;width:23.10px;height:19px;margin:0"></div>
<div class="r u" style="left:260.50px;top:445px;width:38.50px;height:19px;margin:0"></div>
<div class="r u" style="left:306.70px;top:445px;width:77.00px;height:19px;margin:0"></div>
<div class="r u" style="left:391.40px;top:445px;width:38.50px;height:19px;margin:0"></div>
<div class="ln" style="left:68px;top:445px;">    <span style="color:#6a9955">// Я бы подобное для теста реализовал через mp.game.graphics.drawText</span></div>
<span class="ln" style="left:18.90px;top:464px;color:#858585">764</span>
<div class="r u" style="left:121.90px;top:464px;width:15.40px;height:19px;margin:0"></div>
<div class="r u" style="left:229.70px;top:464px;width:23.10px;height:19px;margin:0"></div>
<div class="r u" style="left:260.50px;top:464px;width:38.50px;height:19px;margin:0"></div>
<div class="r u" style="left:306.70px;top:464px;width:53.90px;height:19px;margin:0"></div>
<div class="r u" style="left:368.30px;top:464px;width:61.60px;height:19px;margin:0"></div>
<div class="r u" style="left:437.60px;top:464px;width:23.10px;height:19px;margin:0"></div>
<div class="r u" style="left:468.40px;top:464px;width:38.50px;height:19px;margin:0"></div>
<div class="ln" style="left:68px;top:464px;">    <span style="color:#6a9955">// По weaponHash уже можно вывести название или сразу textLabel</span></div>
<span class="ln" style="left:18.90px;top:483px;color:#858585">765</span>
<div class="r u" style="left:121.90px;top:483px;width:46.20px;height:19px;margin:0"></div>
<div class="r u" style="left:175.80px;top:483px;width:7.70px;height:19px;margin:0"></div>
<div class="r u" style="left:191.20px;top:483px;width:53.90px;height:19px;margin:0"></div>
<div class="r u" style="left:252.80px;top:483px;width:7.70px;height:19px;margin:0"></div>
<div class="r u" style="left:268.20px;top:483px;width:23.10px;height:19px;margin:0"></div>
<div class="ln" style="left:68px;top:483px;">    <span style="color:#6a9955">// Пример с выводом в чат.</span></div>
<span class="ln" style="left:18.90px;top:502px;color:#858585">766</span>
<div class="r h" style="left:268.20px;top:502px;width:92.40px;height:19px;"></div>
<div class="r h" style="left:476.10px;top:502px;width:92.40px;height:19px;"></div>
<div class="ln" style="left:68px;top:502px;">    <span style="color:#9cdcfe">mp</span>.<span style="color:#9cdcfe">gui</span>.<span style="color:#9cdcfe">chat</span>.<span style="color:#dcdcaa">push</span><span style="color:#da70d6">(</span><span style="color:#ce9178">`( </span><span style="color:#569cd6">$</span><span style="color:#179fff">{</span><span style="color:#9cdcfe">killerPlayer</span>.<span style="color:#9cdcfe">remoteId</span><span style="color:#179fff">}</span><span style="color:#ce9178"> ) </span><span style="color:#569cd6">$</span><span style="color:#179fff">{</span><span style="color:#9cdcfe">killerPlayer</span>.<span style="color:#9cdcfe">name</span><span style="color:#179fff">}</span><span style="color:#ce9178"> kill ( </span><span style="color:#569cd6">$</span><span style="color:#179fff">{</span><span style="color:#9cdcfe">deathPlayer</span>.<span style="color:#9cdcfe">remoteId</span><span style="color:#179fff">}</span><span style="color:#ce9178"> ) </span><span style="color:#569cd6">$</span><span style="color:#179fff">{</span><span style="color:#9cdcfe">deathPlayer</span>.<span style="color:#9cdcfe">name</span><span style="color:#179fff">}</span><span style="color:#ce9178"> with </span><span style="color:#569cd6">$</span><span style="color:#179fff">{</span><span style="color:#9cdcfe">weaponHash</span><span style="color:#179fff">}</span><span style="color:#ce9178">`</span><span style="color:#da70d6">)</span></div>
<span class="ln" style="left:18.90px;top:521px;color:#858585">767</span>
<div class="ln" style="left:68px;top:521px;"><span style="color:#ffd700">}</span></div>
<span class="ln" style="left:18.90px;top:540px;color:#858585">768</span>
<span class="ln" style="left:18.90px;top:559px;color:#858585">769</span>
<div class="ln" style="left:68px;top:559px;"><span style="color:#9cdcfe">mp</span>.<span style="color:#9cdcfe">events</span>.<span style="color:#dcdcaa">add</span><span style="color:#ffd700">(</span><span style="color:#ce9178">"client::onPlayerDeath"</span>, <span style="color:#dcdcaa">PlayerDeathHandler</span><span style="color:#ffd700">)</span>;</div>
<span class="ln" style="left:18.90px;top:578px;color:#858585">770</span>
<span class="ln" style="left:18.90px;top:597px;color:#858585">771</span>
<div class="ln" style="left:68px;top:597px;"><span style="color:#9cdcfe">mp</span>.<span style="color:#9cdcfe">events</span>.<span style="color:#dcdcaa">add</span><span style="color:#ffd700">(</span><span style="color:#ce9178">'admin:clean_chat'</span>, <span style="color:#da70d6">(</span><span style="color:#da70d6">)</span> <span style="color:#569cd6">=&gt;</span> <span style="color:#da70d6">{</span></div>
<span class="ln" style="left:18.90px;top:616px;color:#858585">772</span>
<div class="ln" style="left:68px;top:616px;">    <span style="color:#9cdcfe">mp</span>.<span style="color:#9cdcfe">gui</span>.<span style="color:#9cdcfe">chat</span>.<span style="color:#dcdcaa">show</span><span style="color:#179fff">(</span><span style="color:#569cd6">false</span><span style="color:#179fff">)</span>;</div>
<span class="ln" style="left:18.90px;top:635px;color:#858585">773</span>
<span class="ln" style="left:18.90px;top:654px;color:#858585">774</span>
<div class="ln" style="left:68px;top:654px;">    <span style="color:#c586c0">for</span> <span style="color:#179fff">(</span><span style="color:#569cd6">var</span> <span style="color:#9cdcfe">i</span> = <span style="color:#b5cea8">0</span>; <span style="color:#9cdcfe">i</span> &lt; <span style="color:#b5cea8">666</span>; <span style="color:#9cdcfe">i</span>++<span style="color:#179fff">)</span> <span style="color:#179fff">{</span></div>
<span class="ln" style="left:18.90px;top:673px;color:#858585">775</span>
<div class="ln" style="left:68px;top:673px;">        <span style="color:#9cdcfe">mp</span>.<span style="color:#9cdcfe">gui</span>.<span style="color:#9cdcfe">chat</span>.<span style="color:#dcdcaa">push</span><span style="color:#ffd700">(</span><span style="color:#ce9178">''</span><span style="color:#ffd700">)</span>;</div>
<span class="ln" style="left:18.90px;top:692px;color:#858585">776</span>
<div class="ln" style="left:68px;top:692px;">    <span style="color:#179fff">}</span></div>
<span class="ln" style="left:18.90px;top:711px;color:#858585">777</span>
<span class="ln" style="left:18.90px;top:730px;color:#858585">778</span>
<div class="ln" style="left:68px;top:730px;">    <span style="color:#9cdcfe">mp</span>.<span style="color:#9cdcfe">gui</span>.<span style="color:#9cdcfe">chat</span>.<span style="color:#dcdcaa">show</span><span style="color:#179fff">(</span><span style="color:#569cd6">true</span><span style="color:#179fff">)</span>;</div>
<span class="ln" style="left:18.90px;top:749px;color:#858585">779</span>
<div class="ln" style="left:68px;top:749px;"><span style="color:#da70d6">}</span><span style="color:#ffd700">)</span>;</div>
<span class="ln" style="left:18.90px;top:768px;color:#858585">780</span>
<div class="r" style="left:445.3px;top:293px;width:2px;height:19px;background:#aeafad;"></div>
<div class="r" style="left:0;top:0;width:1482px;height:6px;background:linear-gradient(#000000cc,#00000000);"></div>
<div class="r" style="left:68px;top:893px;width:752px;height:12px;background:#424242;"></div>
<div class="r" style="left:1048px;top:0;width:420px;height:33px;background:#252526;box-shadow:0 0 8px 2px rgba(0,0,0,.36);"></div>
<div class="r" style="left:1049px;top:0px;width:2px;height:33px;background:#4a4a4a;"></div>
</div>
<svg class="r" style="left:1349.5px;top:124px;" width="9" height="12" viewBox="0 0 9 12"><path d="M1.500 1 L6.700 6 L1.500 11" fill="none" stroke="#c5c5c5" stroke-width="1.1"/></svg>
<div class="r" style="left:1363px;top:117px;width:223px;height:25px;background:#3c3c3c;border-radius:2px;"></div>
<span class="t" style="left:1370.30px;top:123px;font-size:12.4px;line-height:16px;color:#cccccc;letter-spacing:0.060px;">killerPlayer</span>
<span class="t" style="left:1523.70px;top:123px;font-size:11px;line-height:14px;color:#c5c5c5;letter-spacing:-0.955px;">Aa</span>
<span class="t" style="left:1545.60px;top:123px;font-size:10.4px;line-height:14px;color:#c5c5c5;letter-spacing:0.732px;">ab</span>
<svg class="r" style="left:1543.0px;top:132.8px;" width="18" height="4" viewBox="0 0 18 4"><path d="M.5 0v2.700h16v-2.700" fill="none" stroke="#c5c5c5" stroke-width="1"/></svg>
<div class="r" style="left:1567.6000000000001px;top:132px;width:4.5px;height:4px;background:#c5c5c5;"></div>
<svg class="r" style="left:1572.5px;top:123.8px;" width="8" height="9" viewBox="0 0 8 9"><path d="M4 .3v8 M.5 2.300l7 4 M7.500 2.300l-7 4" fill="none" stroke="#c5c5c5" stroke-width="1.150"/></svg>
<span class="t" style="left:1591.00px;top:123px;font-size:12.4px;line-height:16px;color:#cccccc;letter-spacing:-0.365px;">? of 3</span>
<svg class="r" style="left:1666px;top:123px;" width="14" height="14" viewBox="0 0 14 14"><path d="M7 13V1.500 M1.800 6.500 L7 1.300 L12.200 6.500" fill="none" stroke="#c5c5c5" stroke-width="1.1"/></svg>
<svg class="r" style="left:1691px;top:123px;" width="14" height="14" viewBox="0 0 14 14"><path d="M7 1V12.500 M1.800 7.500 L7 12.700 L12.200 7.500" fill="none" stroke="#c5c5c5" stroke-width="1.1"/></svg>
<svg class="r" style="left:1714px;top:123px;" width="16" height="14" viewBox="0 0 16 14"><path d="M.5 3.400h12 M.5 7.500h15 M.5 11.600h9.800" fill="none" stroke="#c5c5c5" stroke-width="1.1"/></svg>
<svg class="r" style="left:1740.5px;top:124.6px;" width="11" height="11" viewBox="0 0 11 11"><path d="M1 1 L10 10 M10 1 L1 10" fill="none" stroke="#c5c5c5" stroke-width="1.1"/></svg>
<svg class="r" style="left:964px;top:647px;" width="9" height="17" viewBox="0 0 9 17"><path d="M1.500 1.500h2.500l.5.500.5-.500h2.500 M1.500 15.500h2.500l.5-.500.5.500h2.500 M4.500 2v13" fill="none" stroke="#000" stroke-width="2.4"/><path d="M1.500 1.500h2.500l.5.500.5-.500h2.500 M1.500 15.500h2.500l.5-.500.5.500h2.500 M4.500 2v13" fill="none" stroke="#fff" stroke-width="1"/></svg>
<svg class="r" style="left:0;top:0;" width="1861" height="1018" viewBox="0 0 1861 1018" shape-rendering="crispEdges">
<defs><linearGradient id="msh" x1="0" x2="1" y1="0" y2="0"><stop offset="0" stop-color="#000" stop-opacity="0"/><stop offset="1" stop-color="#000" stop-opacity=".42"/></linearGradient><linearGradient id="wmg" x1="0" x2="1" y1="0" y2="0"><stop offset="0" stop-color="#737cf8"/><stop offset=".55" stop-color="#8a86f8"/><stop offset="1" stop-color="#c09cfa"/></linearGradient></defs>
<rect x="1767" y="113" width="8" height="905" fill="url(#msh)"/>
<rect x="1783" y="916" width="78" height="2" fill="#21446a"/>
<rect x="1783" y="926" width="78" height="2" fill="#7a5410"/>
<rect x="1783" y="938" width="78" height="2" fill="#7a5410"/>
<rect x="1836" y="926" width="12" height="2" fill="#ea9612"/>
<rect x="1809" y="938" width="12" height="2" fill="#ea9612"/>
<rect x="1836" y="938" width="12" height="2" fill="#ea9612"/>
<defs><path id="mmV" d="M1783 115h2M1786 115h6M1787 117h2M1790 117h4M1795 117h5M1783 121h2M1786 121h6M1787 123h2M1790 123h4M1795 123h5M1783 131h5M1783 133h7M1783 141h2M1786 141h6M1818 141h8M1828 141h2M1832 141h7M1791 145h2M1794 145h7M1802 145h9M1833 145h5M1846 145h8M1856 145h2M1795 147h6M1804 147h2M1807 147h3M1811 147h4M1825 147h4M1791 149h2M1794 149h6M1795 151h4M1803 151h5M1810 151h2M1813 151h8M1822 151h5M1791 153h2M1794 153h7M1842 153h3M1791 155h2M1794 155h7M1813 155h5M1820 155h5M1795 157h4M1803 157h9M1814 157h2M1817 157h8M1826 157h7M1851 157h5M1858 157h3M1783 163h2M1786 163h6M1820 163h6M1828 163h6M1836 163h8M1846 163h5M1787 165h2M1790 165h3M1802 165h4M1814 165h2M1818 165h4M1840 165h4M1787 167h2M1790 167h6M1802 167h9M1813 167h2M1787 169h2M1790 169h8M1783 175h2M1786 175h6M1819 175h5M1826 175h6M1834 175h6M1842 175h4M1787 177h2M1790 177h4M1795 177h6M1825 177h5M1844 177h4M1787 179h2M1790 179h8M1804 179h5M1787 181h2M1790 181h6M1797 181h2M1811 181h6M1783 187h2M1786 187h6M1822 187h5M1829 187h5M1836 187h5M1843 187h5M1787 189h2M1790 189h6M1797 189h4M1836 189h6M1844 189h5M1787 191h2M1790 191h4M1795 191h6M1807 191h4M1787 193h2M1790 193h6M1810 193h4M1783 199h5M1783 201h4M1783 203h2M1786 203h6M1813 203h5M1820 203h8M1830 203h3M1835 203h8M1845 203h5M1787 205h4M1787 207h3M1793 207h2M1796 207h8M1805 207h5M1787 209h2M1790 209h3M1794 209h7M1787 211h2M1790 211h6M1797 211h5M1816 211h5M1787 213h6M1787 215h6M1787 217h2M1790 217h8M1809 217h8M1787 219h2M1790 219h4M1795 219h5M1828 219h5M1787 221h2M1790 221h4M1795 221h6M1834 221h6M1787 223h2M1790 223h6M1797 223h8M1832 223h6M1787 225h2M1790 225h8M1818 225h4M1787 227h2M1790 227h4M1783 233h2M1786 233h6M1821 233h6M1829 233h6M1791 237h2M1794 237h6M1801 237h6M1847 237h6M1795 239h5M1803 239h2M1806 239h6M1813 239h6M1836 239h7M1795 241h7M1806 241h5M1813 241h2M1816 241h6M1859 241h2M1795 243h4M1803 243h6M1811 243h2M1814 243h6M1821 243h8M1848 243h6M1795 245h7M1805 245h2M1808 245h8M1817 245h4M1832 245h6M1840 245h5M1795 247h6M1804 247h2M1807 247h7M1815 247h4M1791 249h2M1794 249h7M1802 249h5M1842 249h5M1795 251h5M1803 251h2M1806 251h4M1811 251h4M1833 251h4M1839 251h6M1783 261h2M1786 261h6M1816 261h5M1823 261h6M1791 265h2M1794 265h3M1798 265h5M1825 265h7M1849 265h5M1795 267h6M1805 267h5M1812 267h2M1815 267h3M1819 267h6M1795 269h4M1803 269h6M1811 269h2M1814 269h3M1818 269h5M1834 269h8M1795 271h8M1807 271h6M1815 271h2M1818 271h8M1827 271h4M1795 273h6M1805 273h3M1810 273h2M1813 273h8M1822 273h5M1841 273h5M1857 273h4M1795 275h7M1806 275h6M1814 275h2M1817 275h7M1825 275h5M1842 275h8M1791 277h2M1794 277h3M1806 277h6M1795 279h6M1804 279h2M1807 279h3M1811 279h4M1825 279h6M1787 289h6M1796 289h2M1799 289h4M1804 289h6M1783 291h2M1786 291h6M1811 291h5M1818 291h5M1825 291h6M1833 291h6M1841 291h5M1848 291h6M1787 293h6M1796 293h2M1799 293h6M1806 293h6M1787 295h8M1793 297h4M1795 301h5M1795 307h8M1795 313h7M1795 319h5M1795 325h5M1795 331h8M1795 337h5M1795 343h8M1795 349h5M1793 359h8M1807 359h2M1810 359h7M1818 359h4M1846 359h4M1852 359h4M1783 361h2M1786 361h6M1791 363h6M1801 363h5M1791 365h2M1794 365h4M1799 365h8M1791 367h2M1794 367h4M1799 367h7M1818 367h4M1795 371h5M1795 373h2M1798 373h8M1821 373h4M1853 373h2M1857 373h4M1795 381h2M1798 381h8M1791 389h5M1791 393h2M1794 393h6M1791 395h2M1794 395h8M1803 395h8M1821 395h5M1828 395h6M1836 395h4M1791 397h2M1794 397h6M1801 397h6M1791 399h2M1794 399h7M1802 399h8M1824 399h6M1843 399h5M1791 401h2M1794 401h6M1801 401h6M1787 409h9M1788 411h4M1788 413h5M1788 415h5M1788 417h8M1788 419h5M1788 421h8M1788 423h5M1788 425h4M1788 427h8M1788 429h6M1788 431h5M1788 433h5M1788 435h5M1783 443h2M1786 443h6M1810 443h4M1816 443h2M1820 443h6M1787 445h2M1790 445h7M1809 445h5M1836 445h4M1787 447h2M1790 447h4M1795 447h6M1815 447h5M1849 447h6M1857 447h3M1791 449h6M1800 449h2M1803 449h6M1810 449h5M1787 451h2M1790 451h3M1820 451h7M1842 451h5M1787 453h2M1790 453h3M1794 453h7M1820 453h7M1838 453h7M1793 455h7M1787 457h2M1790 457h4M1795 457h7M1832 457h6M1840 457h8M1850 457h6M1858 457h3M1787 459h2M1790 459h7M1823 459h6M1847 459h6M1787 461h2M1790 461h4M1795 461h4M1821 461h5M1834 461h6M1852 461h6M1787 463h7M1797 463h2M1800 463h5M1806 463h5M1793 465h7M1803 465h2M1806 465h6M1813 465h6M1791 479h8M1791 481h5M1791 483h2M1794 483h8M1803 483h4M1834 483h5M1791 485h2M1794 485h8M1803 485h6M1783 495h2M1786 495h6M1791 497h5M1791 503h2M1794 503h3M1819 503h6M1827 503h6M1841 503h6M1791 505h2M1794 505h8M1803 505h6M1858 505h3M1791 513h2M1794 513h4M1799 513h5M1791 515h2M1794 515h4M1799 515h5M1791 517h2M1794 517h4M1799 517h5M1791 519h2M1794 519h4M1799 519h5M1791 521h2M1794 521h4M1799 521h5M1791 525h2M1794 525h4M1799 525h5M1791 527h2M1794 527h4M1799 527h5M1791 529h2M1794 529h4M1799 529h5M1791 533h2M1794 533h4M1799 533h8M1791 535h2M1794 535h4M1799 535h8M1791 537h2M1794 537h4M1799 537h8M1791 539h2M1794 539h4M1799 539h8M1791 541h2M1794 541h4M1799 541h8M1791 543h2M1794 543h4M1799 543h8M1791 545h2M1794 545h4M1799 545h8M1791 547h2M1794 547h4M1799 547h8M1791 551h2M1794 551h4M1799 551h6M1791 553h2M1794 553h4M1799 553h6M1791 555h2M1794 555h4M1799 555h6M1795 561h7M1795 563h2M1798 563h4M1803 563h8M1795 565h2M1798 565h4M1803 565h8M1795 567h2M1798 567h4M1803 567h8M1783 579h2M1786 579h6M1787 581h2M1790 581h8M1799 581h5M1839 581h4M1787 583h2M1790 583h4M1795 583h6M1827 583h6M1841 583h6M1849 583h4M1855 583h5M1783 589h2M1786 589h6M1821 589h5M1828 589h4M1834 589h5M1791 591h8M1787 593h6M1796 593h2M1799 593h7M1807 593h6M1787 595h2M1790 595h8M1828 595h6M1787 597h2M1790 597h4M1795 597h7M1817 597h6M1831 597h5M1783 605h2M1786 605h6M1813 605h7M1822 605h5M1829 605h7M1787 607h2M1790 607h7M1798 607h5M1787 609h2M1790 609h8M1799 609h8M1787 611h2M1790 611h4M1795 611h8M1787 613h2M1790 613h8M1799 613h2M1807 613h6M1821 613h5M1828 613h5M1791 615h5M1799 615h2M1802 615h6M1809 615h8M1783 641h2M1786 641h6M1810 641h3M1815 641h6M1791 643h4M1798 643h2M1801 643h6M1808 643h6M1783 649h2M1786 649h6M1821 649h3M1826 649h5M1833 649h8M1787 651h2M1790 651h4M1795 651h9M1815 651h4M1787 653h2M1790 653h7M1811 653h7M1787 655h2M1790 655h8M1799 655h5M1789 661h6M1783 665h2M1786 665h6M1819 665h4M1787 667h2M1790 667h8M1799 667h6M1830 667h4M1836 667h5M1787 669h5M1795 669h2M1798 669h7M1806 669h5M1787 671h2M1790 671h6M1783 677h2M1786 677h6M1822 677h6M1787 679h2M1790 679h7M1798 679h5M1783 685h2M1786 685h3M1790 685h5M1783 687h2M1786 687h6M1802 687h8M1783 693h2M1786 693h6M1793 693h8M1783 695h2M1786 695h4M1791 695h5M1783 697h2M1786 697h3M1790 697h5M1808 697h5M1821 697h6M1783 699h2M1786 699h8M1795 699h5M1812 699h4M1783 701h4M1788 703h5M1788 705h6M1788 707h9M1788 709h5M1783 717h2M1786 717h6M1813 717h5M1820 717h4M1787 719h2M1790 719h4M1846 719h6M1854 719h5M1787 721h2M1790 721h7M1808 721h6M1783 729h2M1786 729h6M1801 729h4M1783 735h2M1786 735h4M1791 735h8M1783 737h2M1786 737h4M1791 737h8M1783 739h2M1786 739h4M1791 739h8M1783 741h2M1786 741h4M1791 741h8M1783 743h2M1786 743h4M1791 743h8M1783 745h2M1786 745h4M1791 745h8M1783 757h2M1786 757h4M1791 757h2M1783 759h2M1786 759h4M1791 759h2M1783 761h2M1786 761h4M1791 761h2M1783 763h2M1786 763h4M1791 763h2M1783 765h2M1786 765h4M1791 765h2M1787 769h5M1789 771h5M1797 771h2M1800 771h4M1805 771h7M1787 773h4M1783 775h2M1786 775h8M1818 775h4M1830 775h5M1783 781h2M1786 781h6M1812 781h6M1820 781h2M1793 783h5M1787 785h2M1790 785h6M1797 785h4M1815 785h5M1822 785h5M1829 785h6M1787 787h2M1790 787h6M1787 789h2M1790 789h3M1794 789h8M1835 789h5M1848 789h6M1856 789h4M1787 791h2M1790 791h7M1798 791h3M1817 791h9M1859 791h2M1783 799h2M1786 799h6M1815 799h6M1823 799h6M1787 801h2M1790 801h6M1787 803h2M1790 803h7M1798 803h5M1817 803h6M1843 803h4M1849 803h5M1791 805h5M1799 805h2M1802 805h5M1808 805h9M1787 807h5M1783 813h2M1786 813h6M1820 813h5M1827 813h5M1834 813h6M1842 813h5M1849 813h5M1787 815h2M1790 815h3M1794 815h5M1827 815h7M1791 817h6M1800 817h2M1803 817h4M1808 817h7M1787 819h5M1795 819h2M1798 819h4M1803 819h6M1783 829h2M1786 829h6M1816 829h6M1824 829h6M1832 829h7M1841 829h5M1848 829h5M1787 831h2M1790 831h4M1795 831h4M1787 833h2M1790 833h7M1827 833h6M1787 835h2M1790 835h4M1795 835h4M1783 841h2M1786 841h4M1791 841h5M1783 843h2M1786 843h4M1791 843h5M1783 845h2M1786 845h4M1791 845h5M1783 847h2M1786 847h4M1791 847h5M1787 859h4M1783 861h2M1786 861h6M1795 863h8M1807 863h4M1795 865h2M1798 865h8M1807 865h6M1799 867h6M1799 869h2M1802 869h4M1807 869h4M1817 869h6M1831 869h4M1843 869h8M1799 875h2M1802 875h8M1811 875h5M1833 875h6M1841 875h5M1783 881h2M1786 881h6M1793 881h5M1819 881h4M1783 883h2M1786 883h8M1795 883h6M1815 883h8M1831 883h2M1783 885h2M1786 885h4M1791 885h6M1783 889h2M1786 889h6M1814 889h4M1820 889h6M1828 889h7M1837 889h4M1843 889h1M1846 889h1M1849 889h1M1852 889h3M1857 889h4M1790 891h4M1796 891h2M1799 891h4M1804 891h2M1807 891h13M1837 891h6M1845 891h7M1854 891h4M1860 891h1M1792 893h2M1795 893h4M1800 893h2M1803 893h13M1822 893h4M1828 893h1M1831 893h1M1834 893h1M1811 901h6M1819 901h6M1827 901h6M1787 911h6M1824 911h6M1832 911h6M1840 911h6M1783 917h2M1786 917h6M1811 927h11M1824 927h10M1836 927h12M1787 939h2M1790 939h3M1794 939h4M1809 939h12M1822 939h8M1836 939h12M1849 939h4M1783 945h2M1786 945h6M1783 949h2M1786 949h6M1787 951h2M1790 951h3M1794 951h4M1796 955h1M1803 955h1M1812 955h1M1791 957h2M1794 957h3M1798 957h4M1787 963h2M1790 963h3M1794 963h4"/><path id="mmP" d="M1785 115h1M1792 115h1M1812 115h1M1789 117h1M1794 117h1M1800 117h1M1817 117h1M1783 119h3M1785 121h1M1792 121h1M1813 121h1M1789 123h1M1794 123h1M1800 123h1M1816 123h1M1783 125h3M1789 131h1M1793 131h1M1791 133h1M1797 133h1M1785 141h1M1792 141h1M1815 141h1M1826 141h1M1830 141h1M1793 145h1M1801 145h1M1811 145h1M1831 145h1M1838 145h1M1844 145h1M1854 145h1M1858 145h1M1802 147h1M1806 147h1M1810 147h1M1815 147h1M1829 147h1M1836 147h1M1793 149h1M1800 149h1M1824 149h1M1800 151h2M1812 151h1M1821 151h1M1827 151h1M1842 151h1M1848 151h1M1854 151h1M1860 151h1M1793 153h1M1801 153h1M1824 153h1M1830 153h1M1840 153h1M1845 153h1M1859 153h1M1793 155h1M1801 155h1M1818 155h1M1826 155h1M1800 157h2M1816 157h1M1825 157h1M1833 157h1M1849 157h1M1856 157h1M1785 161h1M1785 163h1M1792 163h1M1817 163h1M1826 163h1M1834 163h1M1844 163h1M1789 165h1M1793 165h1M1806 165h1M1812 165h1M1816 165h1M1822 165h1M1828 165h1M1838 165h1M1844 165h1M1857 165h1M1789 167h1M1796 167h1M1811 167h1M1816 167h1M1789 169h1M1798 169h1M1816 169h1M1828 169h1M1783 171h3M1785 175h1M1792 175h1M1816 175h1M1824 175h1M1832 175h1M1840 175h1M1789 177h1M1794 177h1M1801 177h1M1811 177h1M1817 177h1M1823 177h1M1830 177h1M1836 177h1M1842 177h1M1849 177h1M1789 179h1M1798 179h1M1809 179h1M1816 179h1M1789 181h1M1796 181h1M1799 181h1M1809 181h1M1818 181h1M1783 183h3M1785 187h1M1792 187h1M1819 187h1M1827 187h1M1834 187h1M1841 187h1M1789 189h1M1796 189h1M1801 189h1M1817 189h1M1822 189h1M1828 189h1M1834 189h1M1842 189h1M1850 189h1M1789 191h1M1794 191h1M1801 191h1M1811 191h1M1818 191h1M1789 193h1M1796 193h1M1814 193h1M1821 193h1M1783 195h3M1789 199h1M1803 199h1M1788 201h1M1793 201h1M1785 203h1M1792 203h1M1810 203h1M1818 203h1M1828 203h1M1833 203h1M1843 203h1M1792 205h1M1797 205h1M1791 207h1M1795 207h1M1804 207h1M1810 207h1M1789 209h1M1793 209h1M1801 209h1M1822 209h1M1789 211h1M1796 211h1M1802 211h1M1821 211h1M1827 211h1M1834 211h1M1794 213h1M1799 213h1M1794 215h1M1799 215h1M1789 217h1M1798 217h1M1817 217h1M1824 217h1M1789 219h1M1794 219h1M1800 219h1M1815 219h1M1826 219h1M1834 219h1M1789 221h1M1794 221h1M1801 221h1M1819 221h1M1832 221h1M1840 221h1M1847 221h1M1789 223h1M1796 223h1M1805 223h1M1830 223h1M1839 223h1M1789 225h1M1798 225h1M1816 225h1M1823 225h1M1789 227h1M1794 227h1M1810 227h1M1817 227h1M1785 229h1M1785 233h1M1792 233h1M1818 233h1M1827 233h1M1793 237h1M1800 237h1M1807 237h1M1827 237h1M1833 237h1M1839 237h1M1845 237h1M1854 237h1M1801 239h1M1805 239h1M1812 239h1M1819 239h1M1834 239h1M1844 239h1M1803 241h2M1815 241h1M1822 241h1M1845 241h1M1851 241h1M1857 241h1M1800 243h2M1813 243h1M1820 243h1M1829 243h1M1846 243h1M1854 243h1M1860 243h1M1803 245h1M1807 245h1M1816 245h1M1821 245h1M1838 245h1M1846 245h1M1802 247h1M1806 247h1M1814 247h1M1819 247h1M1836 247h1M1843 247h1M1793 249h1M1801 249h1M1807 249h1M1823 249h1M1834 249h1M1840 249h1M1848 249h1M1801 251h1M1805 251h1M1810 251h1M1815 251h1M1831 251h1M1837 251h1M1846 251h1M1785 255h1M1785 261h1M1792 261h1M1813 261h1M1821 261h1M1793 265h1M1797 265h1M1803 265h1M1823 265h1M1832 265h1M1847 265h1M1855 265h1M1802 267h2M1814 267h1M1818 267h1M1825 267h1M1842 267h1M1853 267h1M1859 267h1M1800 269h2M1813 269h1M1817 269h1M1823 269h1M1842 269h1M1848 269h1M1804 271h2M1817 271h1M1826 271h1M1831 271h1M1841 271h1M1847 271h1M1802 273h2M1812 273h1M1821 273h1M1827 273h1M1846 273h1M1855 273h1M1803 275h2M1816 275h1M1824 275h1M1830 275h1M1850 275h1M1856 275h1M1793 277h1M1797 277h1M1813 277h1M1802 279h1M1806 279h1M1810 279h1M1815 279h1M1831 279h1M1843 279h1M1850 279h1M1785 283h1M1783 285h3M1794 289h1M1798 289h1M1803 289h1M1810 289h1M1785 291h1M1792 291h1M1808 291h1M1816 291h1M1823 291h1M1831 291h1M1839 291h1M1846 291h1M1794 293h1M1798 293h1M1805 293h1M1812 293h1M1796 295h1M1801 295h1M1798 297h1M1803 297h1M1798 299h1M1801 301h1M1810 301h1M1800 303h1M1798 305h1M1804 307h1M1813 307h1M1800 309h1M1798 311h1M1803 313h1M1812 313h1M1800 315h1M1798 317h1M1801 319h1M1810 319h1M1800 321h1M1798 323h1M1801 325h1M1810 325h1M1800 327h1M1798 329h1M1804 331h1M1813 331h1M1800 333h1M1797 335h1M1801 337h1M1810 337h1M1800 339h1M1798 341h1M1804 343h1M1812 343h1M1800 345h1M1798 347h1M1801 349h1M1810 349h1M1800 351h1M1802 359h1M1806 359h1M1809 359h1M1817 359h1M1822 359h1M1844 359h1M1850 359h1M1856 359h1M1785 361h1M1792 361h1M1798 363h2M1793 365h1M1798 365h1M1807 365h1M1824 365h1M1839 365h1M1793 367h1M1798 367h1M1806 367h1M1823 367h1M1801 371h2M1797 373h1M1806 373h1M1819 373h1M1825 373h1M1831 373h1M1837 373h1M1851 373h1M1855 373h1M1797 381h1M1806 381h1M1820 381h1M1827 381h1M1834 381h1M1797 389h2M1793 393h1M1800 393h1M1821 393h1M1826 393h1M1837 393h1M1852 393h1M1793 395h1M1802 395h1M1811 395h1M1826 395h1M1834 395h1M1840 395h1M1846 395h1M1853 395h1M1860 395h1M1793 397h1M1800 397h1M1807 397h1M1820 397h1M1793 399h1M1801 399h1M1810 399h1M1830 399h1M1841 399h1M1849 399h1M1793 401h1M1800 401h1M1807 401h1M1821 401h1M1783 407h3M1797 409h1M1792 411h1M1793 413h1M1793 415h1M1796 417h1M1793 419h1M1796 421h1M1793 423h1M1792 425h1M1796 427h1M1794 429h1M1793 431h1M1793 433h1M1793 435h1M1783 437h2M1785 443h1M1792 443h1M1807 443h1M1814 443h1M1818 443h1M1789 445h1M1797 445h1M1807 445h1M1814 445h1M1823 445h1M1834 445h1M1840 445h1M1846 445h1M1852 445h1M1859 445h1M1789 447h1M1794 447h1M1801 447h1M1813 447h1M1820 447h1M1836 447h1M1841 447h1M1847 447h1M1855 447h1M1798 449h1M1802 449h1M1809 449h1M1815 449h1M1789 451h1M1793 451h1M1812 451h1M1818 451h1M1827 451h1M1833 451h1M1840 451h1M1847 451h1M1854 451h1M1789 453h1M1793 453h1M1801 453h1M1818 453h1M1827 453h1M1836 453h1M1845 453h1M1852 453h1M1801 455h1M1806 455h1M1789 457h1M1794 457h1M1802 457h1M1818 457h1M1830 457h1M1838 457h1M1848 457h1M1856 457h1M1789 459h1M1797 459h1M1810 459h1M1815 459h1M1821 459h1M1829 459h1M1836 459h1M1845 459h1M1854 459h1M1789 461h1M1794 461h1M1799 461h1M1813 461h1M1819 461h1M1826 461h1M1832 461h1M1840 461h1M1850 461h1M1858 461h1M1795 463h1M1799 463h1M1805 463h1M1811 463h1M1801 465h1M1805 465h1M1812 465h1M1819 465h1M1785 467h1M1800 479h1M1797 481h1M1817 481h1M1793 483h1M1802 483h1M1807 483h1M1818 483h1M1832 483h1M1840 483h1M1793 485h1M1802 485h1M1809 485h1M1820 485h1M1783 493h3M1785 495h1M1792 495h1M1811 495h1M1797 497h1M1793 503h1M1797 503h1M1825 503h1M1833 503h1M1839 503h1M1847 503h1M1857 503h1M1793 505h1M1802 505h1M1809 505h1M1834 505h1M1840 505h1M1856 505h1M1793 513h1M1798 513h1M1804 513h1M1832 513h1M1836 513h1M1843 513h1M1793 515h1M1798 515h1M1804 515h1M1832 515h1M1836 515h1M1844 515h1M1793 517h1M1798 517h1M1804 517h1M1832 517h1M1836 517h1M1843 517h1M1793 519h1M1798 519h1M1804 519h1M1832 519h1M1836 519h1M1843 519h1M1793 521h1M1798 521h1M1804 521h1M1832 521h1M1836 521h1M1843 521h1M1793 525h1M1798 525h1M1804 525h1M1835 525h1M1839 525h1M1846 525h1M1793 527h1M1798 527h1M1804 527h1M1835 527h1M1839 527h1M1847 527h1M1793 529h1M1798 529h1M1804 529h1M1835 529h1M1839 529h1M1847 529h1M1793 533h1M1798 533h1M1807 533h1M1851 533h1M1855 533h1M1793 535h1M1798 535h1M1807 535h1M1851 535h1M1855 535h1M1793 537h1M1798 537h1M1807 537h1M1851 537h1M1855 537h1M1793 539h1M1798 539h1M1807 539h1M1851 539h1M1855 539h1M1793 541h1M1798 541h1M1807 541h1M1851 541h1M1855 541h1M1793 543h1M1798 543h1M1807 543h1M1851 543h1M1855 543h1M1793 545h1M1798 545h1M1807 545h1M1851 545h1M1855 545h1M1793 547h1M1798 547h1M1807 547h1M1851 547h1M1855 547h1M1793 551h1M1798 551h1M1805 551h1M1836 551h1M1840 551h1M1847 551h1M1793 553h1M1798 553h1M1805 553h1M1836 553h1M1840 553h1M1847 553h1M1793 555h1M1798 555h1M1805 555h1M1836 555h1M1840 555h1M1848 555h1M1803 561h2M1797 563h1M1802 563h1M1811 563h1M1845 563h1M1849 563h1M1857 563h1M1797 565h1M1802 565h1M1811 565h1M1845 565h1M1849 565h1M1857 565h1M1797 567h1M1802 567h1M1811 567h1M1845 567h1M1849 567h1M1857 567h1M1783 573h3M1785 579h1M1792 579h1M1816 579h1M1789 581h1M1798 581h1M1804 581h1M1830 581h1M1837 581h1M1843 581h1M1849 581h1M1855 581h1M1789 583h1M1794 583h1M1801 583h1M1813 583h1M1825 583h1M1833 583h1M1839 583h1M1847 583h1M1853 583h1M1860 583h1M1783 585h3M1785 589h1M1792 589h1M1818 589h1M1826 589h1M1832 589h1M1800 591h1M1804 591h1M1794 593h1M1798 593h1M1806 593h1M1813 593h1M1789 595h1M1798 595h1M1819 595h1M1826 595h1M1834 595h1M1841 595h1M1789 597h1M1794 597h1M1802 597h1M1815 597h1M1823 597h1M1829 597h1M1837 597h1M1785 599h1M1783 601h3M1785 605h1M1792 605h1M1810 605h1M1820 605h1M1827 605h1M1789 607h1M1797 607h1M1803 607h1M1818 607h1M1789 609h1M1798 609h1M1807 609h1M1821 609h1M1828 609h1M1789 611h1M1794 611h1M1803 611h1M1818 611h1M1825 611h1M1789 613h1M1798 613h1M1801 613h1M1813 613h1M1819 613h1M1826 613h1M1834 613h1M1797 615h1M1801 615h1M1808 615h1M1817 615h1M1785 617h1M1783 621h3M1785 641h1M1792 641h1M1807 641h1M1813 641h1M1796 643h1M1800 643h1M1807 643h1M1814 643h1M1783 645h3M1785 649h1M1792 649h1M1818 649h1M1824 649h1M1831 649h1M1789 651h1M1794 651h1M1804 651h1M1819 651h1M1834 651h1M1849 651h1M1789 653h1M1797 653h1M1818 653h1M1824 653h1M1831 653h1M1789 655h1M1798 655h1M1804 655h1M1821 655h1M1827 655h1M1796 661h1M1800 661h1M1785 665h1M1792 665h1M1816 665h1M1789 667h1M1798 667h1M1805 667h1M1822 667h1M1828 667h1M1834 667h1M1842 667h1M1793 669h1M1797 669h1M1805 669h1M1811 669h1M1789 671h1M1796 671h1M1812 671h1M1783 673h3M1785 677h1M1792 677h1M1819 677h1M1789 679h1M1797 679h1M1803 679h1M1822 679h1M1785 685h1M1789 685h1M1795 685h1M1806 685h1M1785 687h1M1792 687h1M1811 687h1M1785 693h1M1792 693h1M1801 693h1M1817 693h1M1785 695h1M1790 695h1M1796 695h1M1811 695h1M1785 697h1M1789 697h1M1795 697h1M1813 697h1M1819 697h1M1828 697h1M1785 699h1M1794 699h1M1800 699h1M1816 699h1M1823 699h1M1788 701h1M1793 703h1M1794 705h1M1797 707h1M1793 709h1M1783 711h2M1785 717h1M1792 717h1M1810 717h1M1818 717h1M1789 719h1M1794 719h1M1814 719h1M1820 719h1M1826 719h1M1832 719h1M1844 719h1M1852 719h1M1860 719h1M1789 721h1M1797 721h1M1814 721h1M1820 721h1M1827 721h1M1833 721h1M1846 721h1M1852 721h1M1858 721h1M1783 723h3M1785 729h1M1792 729h1M1805 729h1M1812 729h1M1785 735h1M1790 735h1M1799 735h1M1827 735h1M1831 735h1M1838 735h1M1785 737h1M1790 737h1M1799 737h1M1827 737h1M1831 737h1M1838 737h1M1785 739h1M1790 739h1M1799 739h1M1827 739h1M1831 739h1M1837 739h1M1785 741h1M1790 741h1M1799 741h1M1827 741h1M1831 741h1M1837 741h1M1785 743h1M1790 743h1M1799 743h1M1827 743h1M1831 743h1M1838 743h1M1785 745h1M1790 745h1M1799 745h1M1827 745h1M1831 745h1M1837 745h1M1785 757h1M1790 757h1M1793 757h1M1828 757h1M1832 757h1M1839 757h1M1785 759h1M1790 759h1M1793 759h1M1828 759h1M1832 759h1M1838 759h1M1785 761h1M1790 761h1M1793 761h1M1828 761h1M1832 761h1M1839 761h1M1785 763h1M1790 763h1M1793 763h1M1828 763h1M1832 763h1M1839 763h1M1785 765h1M1790 765h1M1793 765h1M1828 765h1M1832 765h1M1838 765h1M1793 769h1M1799 769h1M1795 771h1M1799 771h1M1804 771h1M1812 771h1M1792 773h1M1797 773h1M1785 775h1M1794 775h1M1816 775h1M1822 775h1M1828 775h1M1835 775h1M1841 775h1M1853 775h1M1860 775h1M1785 781h1M1792 781h1M1809 781h1M1818 781h1M1799 783h1M1808 783h1M1789 785h1M1796 785h1M1801 785h1M1820 785h1M1827 785h1M1835 785h1M1844 785h1M1850 785h1M1856 785h1M1789 787h1M1796 787h1M1813 787h1M1820 787h1M1826 787h1M1838 787h1M1851 787h1M1789 789h1M1793 789h1M1802 789h1M1815 789h1M1821 789h1M1827 789h1M1833 789h1M1840 789h1M1846 789h1M1854 789h1M1789 791h1M1797 791h1M1801 791h1M1826 791h1M1840 791h1M1846 791h1M1851 791h1M1857 791h1M1785 793h1M1785 799h1M1792 799h1M1812 799h1M1821 799h1M1789 801h1M1796 801h1M1811 801h1M1825 801h1M1831 801h1M1837 801h1M1843 801h1M1849 801h1M1856 801h1M1789 803h1M1797 803h1M1803 803h1M1823 803h1M1835 803h1M1841 803h1M1847 803h1M1855 803h1M1797 805h1M1801 805h1M1807 805h1M1817 805h1M1793 807h1M1798 807h1M1785 809h1M1785 813h1M1792 813h1M1817 813h1M1825 813h1M1832 813h1M1840 813h1M1847 813h1M1789 815h1M1793 815h1M1799 815h1M1819 815h1M1825 815h1M1835 815h1M1798 817h1M1802 817h1M1807 817h1M1815 817h1M1793 819h1M1797 819h1M1802 819h1M1809 819h1M1785 821h1M1785 829h1M1792 829h1M1813 829h1M1822 829h1M1830 829h1M1839 829h1M1846 829h1M1789 831h1M1794 831h1M1799 831h1M1816 831h1M1789 833h1M1797 833h1M1810 833h1M1825 833h1M1833 833h1M1848 833h1M1789 835h1M1794 835h1M1799 835h1M1818 835h1M1785 837h1M1785 841h1M1790 841h1M1796 841h1M1834 841h1M1838 841h1M1846 841h1M1785 843h1M1790 843h1M1796 843h1M1834 843h1M1838 843h1M1845 843h1M1785 845h1M1790 845h1M1796 845h1M1834 845h1M1838 845h1M1845 845h1M1785 847h1M1790 847h1M1796 847h1M1834 847h1M1838 847h1M1846 847h1M1806 859h1M1822 859h1M1838 859h1M1785 861h1M1792 861h1M1804 863h2M1797 865h1M1806 865h1M1813 865h1M1834 865h1M1806 867h2M1801 869h1M1806 869h1M1811 869h1M1823 869h1M1829 869h1M1835 869h1M1841 869h1M1851 869h1M1858 869h1M1801 875h1M1810 875h1M1816 875h1M1831 875h1M1839 875h1M1847 875h1M1785 881h1M1792 881h1M1798 881h1M1817 881h1M1824 881h1M1785 883h1M1794 883h1M1801 883h1M1823 883h1M1829 883h1M1834 883h1M1785 885h1M1790 885h1M1797 885h1M1828 885h1M1831 885h1M1785 889h1M1792 889h1M1811 889h1M1818 889h1M1826 889h1M1835 889h1M1841 889h1M1844 889h1M1847 889h1M1850 889h1M1855 889h1M1798 891h1M1803 891h1M1806 891h1M1820 891h1M1843 891h1M1852 891h1M1858 891h1M1794 893h1M1799 893h1M1802 893h1M1816 893h1M1826 893h1M1829 893h1M1832 893h1M1836 893h1M1785 895h1M1817 901h1M1825 901h1M1793 911h1M1822 911h1M1830 911h1M1838 911h1M1847 911h1M1785 917h1M1792 917h1M1810 917h1M1831 917h1M1793 925h1M1822 927h1M1834 927h1M1789 939h1M1793 939h1M1798 939h1M1821 939h1M1848 939h1M1785 945h1M1792 945h1M1820 945h1M1841 945h1M1785 949h1M1792 949h1M1815 949h1M1789 951h1M1793 951h1M1798 951h1M1810 951h1M1798 955h1M1801 955h1M1805 955h1M1810 955h1M1813 955h2M1793 957h1M1797 957h1M1802 957h1M1811 957h1M1789 963h1M1793 963h1M1798 963h1M1809 963h1M1785 965h1"/><path id="mmF" d="M1793 115h3M1801 117h10M1793 121h3M1801 123h9M1793 141h3M1812 145h10M1816 147h8M1801 149h11M1828 151h9M1802 153h10M1802 155h10M1834 157h10M1793 163h3M1794 165h7M1797 167h4M1799 169h12M1793 175h3M1802 177h4M1799 179h4M1800 181h4M1793 187h3M1802 189h10M1802 191h4M1797 193h12M1793 203h3M1802 209h8M1803 211h12M1799 217h9M1801 219h9M1802 221h11M1806 223h10M1799 225h9M1795 227h12M1793 233h3M1808 237h9M1820 239h9M1823 241h13M1830 243h11M1822 245h9M1820 247h11M1808 249h9M1816 251h10M1793 261h3M1804 265h13M1826 267h11M1824 269h9M1832 271h4M1828 273h12M1831 275h10M1798 277h7M1816 279h8M1793 291h3M1823 359h8M1793 361h3M1808 365h8M1807 367h10M1807 373h7M1807 381h7M1801 393h10M1812 395h8M1808 397h6M1811 399h12M1808 401h4M1793 443h3M1798 445h4M1802 447h6M1794 451h4M1802 453h11M1803 457h10M1798 459h7M1800 461h8M1808 483h4M1810 485h4M1793 495h3M1798 503h20M1810 505h13M1805 513h4M1805 515h4M1805 517h4M1805 519h4M1805 521h4M1805 525h7M1805 527h7M1805 529h7M1808 533h20M1808 535h20M1808 537h20M1808 539h20M1808 541h20M1808 543h20M1808 545h20M1808 547h20M1806 551h7M1806 553h7M1806 555h7M1812 563h10M1812 565h10M1812 567h10M1793 579h3M1805 581h16M1802 583h7M1793 589h3M1799 595h10M1803 597h7M1793 605h3M1804 607h8M1808 609h8M1804 611h9M1802 613h4M1793 641h3M1793 649h3M1805 651h9M1798 653h12M1805 655h7M1793 665h3M1806 667h11M1797 671h10M1793 677h3M1804 679h12M1796 685h4M1793 687h8M1802 693h9M1797 695h8M1796 697h11M1801 699h10M1793 717h3M1795 719h14M1798 721h9M1793 729h7M1800 735h4M1800 737h4M1800 739h4M1800 741h4M1800 743h4M1800 745h4M1794 757h11M1794 759h11M1794 761h11M1794 763h11M1794 765h11M1795 775h12M1793 781h3M1802 785h12M1797 787h11M1803 789h7M1802 791h14M1793 799h3M1797 801h9M1804 803h12M1793 813h3M1800 815h8M1793 829h3M1800 831h10M1798 833h7M1800 835h12M1797 841h14M1797 843h14M1797 845h14M1797 847h14M1793 861h3M1814 865h6M1812 869h4M1817 875h9M1799 881h13M1802 883h12M1798 885h29M1793 889h3M1821 891h15M1817 893h4M1792 901h18M1794 911h4M1793 917h3M1812 917h18M1792 927h18M1799 939h4M1793 945h3M1822 945h18M1793 949h3M1799 951h4M1803 957h4M1799 963h4"/><path id="mma" d="M1796 115h1M1811 117h1M1816 117h1M1796 121h1M1810 123h1M1815 123h1M1796 141h1M1822 145h1M1824 147h1M1835 147h1M1812 149h1M1823 149h1M1794 151h1M1808 151h1M1837 151h1M1812 153h1M1812 155h1M1825 155h1M1794 157h1M1812 157h1M1844 157h1M1784 161h1M1796 163h1M1801 165h1M1856 165h1M1801 167h1M1815 167h1M1811 169h1M1827 169h1M1796 175h1M1806 177h1M1848 177h1M1803 179h1M1815 179h1M1804 181h1M1817 181h1M1796 187h1M1812 189h1M1849 189h1M1806 191h1M1817 191h1M1809 193h1M1820 193h1M1796 203h1M1810 209h1M1821 209h1M1815 211h1M1833 211h1M1808 217h1M1823 217h1M1810 219h1M1833 219h1M1813 221h1M1846 221h1M1816 223h1M1838 223h1M1808 225h1M1822 225h1M1807 227h1M1816 227h1M1784 229h1M1796 233h1M1817 237h1M1853 237h1M1829 239h1M1843 239h1M1794 241h1M1811 241h1M1836 241h1M1794 243h1M1809 243h1M1841 243h1M1831 245h1M1845 245h1M1831 247h1M1842 247h1M1817 249h1M1847 249h1M1826 251h1M1845 251h1M1784 255h1M1796 261h1M1817 265h1M1854 265h1M1794 267h1M1810 267h1M1837 267h1M1794 269h1M1809 269h1M1833 269h1M1794 271h1M1813 271h1M1836 271h1M1794 273h1M1808 273h1M1840 273h1M1794 275h1M1812 275h1M1841 275h1M1805 277h1M1812 277h1M1824 279h1M1849 279h1M1784 283h1M1796 291h1M1831 359h1M1796 361h1M1816 365h1M1838 365h1M1817 367h1M1822 367h1M1814 373h1M1814 381h1M1833 381h1M1811 393h1M1820 395h1M1859 395h1M1814 397h1M1819 397h1M1823 399h1M1848 399h1M1812 401h1M1820 401h1M1799 409h1M1796 443h1M1802 445h1M1808 447h1M1860 447h1M1798 451h1M1853 451h1M1813 453h1M1851 453h1M1813 457h1M1805 459h1M1853 459h1M1808 461h1M1784 467h1M1812 483h1M1839 483h1M1814 485h1M1819 485h1M1796 495h1M1818 503h1M1823 505h1M1809 513h1M1842 513h1M1809 515h1M1843 515h1M1809 517h1M1842 517h1M1809 519h1M1842 519h1M1809 521h1M1842 521h1M1812 525h1M1845 525h1M1812 527h1M1846 527h1M1812 529h1M1846 529h1M1828 533h1M1828 535h1M1828 537h1M1828 539h1M1828 541h1M1828 543h1M1828 545h1M1828 547h1M1813 551h1M1846 551h1M1813 553h1M1846 553h1M1813 555h1M1847 555h1M1822 563h1M1856 563h1M1822 565h1M1856 565h1M1822 567h1M1856 567h1M1796 579h1M1821 581h1M1809 583h1M1796 589h1M1809 595h1M1840 595h1M1810 597h1M1836 597h1M1784 599h1M1796 605h1M1812 607h1M1817 607h1M1816 609h1M1827 609h1M1813 611h1M1824 611h1M1806 613h1M1833 613h1M1784 617h1M1796 641h1M1796 649h1M1814 651h1M1848 651h1M1810 653h1M1830 653h1M1812 655h1M1826 655h1M1796 665h1M1817 667h1M1841 667h1M1807 671h1M1811 671h1M1796 677h1M1816 679h1M1821 679h1M1800 685h1M1805 685h1M1801 687h1M1810 687h1M1811 693h1M1816 693h1M1805 695h1M1810 695h1M1807 697h1M1827 697h1M1811 699h1M1822 699h1M1804 701h1M1796 717h1M1809 719h1M1859 719h1M1807 721h1M1800 729h1M1811 729h1M1804 735h1M1804 737h1M1804 739h1M1804 741h1M1804 743h1M1804 745h1M1805 757h1M1805 759h1M1805 761h1M1805 763h1M1805 765h1M1807 775h1M1859 775h1M1796 781h1M1814 785h1M1808 787h1M1810 789h1M1860 789h1M1816 791h1M1784 793h1M1796 799h1M1806 801h1M1816 803h1M1854 803h1M1784 809h1M1796 813h1M1808 815h1M1834 815h1M1784 821h1M1796 829h1M1810 831h1M1815 831h1M1805 833h1M1847 833h1M1812 835h1M1817 835h1M1784 837h1M1811 841h1M1845 841h1M1811 843h1M1844 843h1M1811 845h1M1844 845h1M1811 847h1M1845 847h1M1791 859h1M1854 859h1M1796 861h1M1820 865h1M1833 865h1M1816 869h1M1857 869h1M1826 875h1M1846 875h1M1812 881h1M1823 881h1M1814 883h1M1833 883h1M1827 885h1M1830 885h1M1796 889h1M1784 895h1M1810 901h1M1833 901h1M1835 901h1M1783 913h1M1796 917h1M1830 917h1M1810 927h1M1848 927h1M1783 929h1M1783 941h1M1796 945h1M1840 945h1M1796 949h1M1807 957h1M1810 957h1M1784 965h1"/><path id="mmS" d="M1797 115h15M1797 121h16M1797 141h18M1823 145h8M1813 149h10M1813 153h11M1832 153h8M1847 153h12M1797 163h20M1830 165h8M1846 165h10M1818 169h9M1797 175h19M1797 187h22M1791 199h12M1797 203h13M1811 209h10M1817 219h9M1821 221h11M1817 223h13M1809 225h7M1797 233h21M1818 237h9M1837 241h8M1825 249h9M1797 261h16M1834 265h13M1844 267h9M1850 269h11M1849 271h12M1848 273h7M1833 279h10M1797 291h11M1832 359h12M1817 365h7M1826 365h12M1804 371h8M1839 373h12M1800 389h8M1812 393h9M1828 393h9M1839 393h13M1854 393h7M1832 399h9M1813 401h7M1797 443h10M1816 445h7M1825 445h9M1822 447h14M1799 451h13M1829 453h7M1820 457h10M1838 459h7M1842 461h8M1860 461h1M1802 479h8M1799 481h18M1820 483h12M1797 495h14M1849 503h8M1859 503h2M1824 505h10M1842 505h14M1810 513h22M1810 515h22M1810 517h22M1810 519h22M1810 521h22M1813 525h22M1813 527h22M1813 529h22M1829 533h22M1829 535h22M1829 537h22M1829 539h22M1829 541h22M1829 543h22M1829 545h22M1829 547h22M1814 551h22M1814 553h22M1814 555h22M1806 561h8M1823 563h22M1823 565h22M1823 567h22M1797 579h19M1822 581h8M1815 583h10M1797 589h21M1810 595h9M1797 605h13M1797 641h10M1797 649h21M1821 651h13M1836 651h12M1813 655h8M1797 665h19M1797 677h22M1790 701h14M1797 717h13M1834 719h10M1835 721h11M1805 735h22M1840 735h21M1805 737h22M1840 737h21M1805 739h22M1839 739h22M1805 741h22M1839 741h22M1805 743h22M1840 743h21M1805 745h22M1839 745h22M1806 757h22M1841 757h20M1806 759h22M1840 759h21M1806 761h22M1841 761h20M1806 763h22M1841 763h20M1806 765h22M1840 765h21M1808 775h8M1843 775h10M1797 781h12M1801 783h7M1837 785h7M1828 787h10M1840 787h11M1853 787h8M1828 791h12M1797 799h15M1813 801h12M1825 803h10M1797 813h20M1809 815h10M1797 829h16M1812 833h13M1835 833h12M1812 841h22M1812 843h22M1812 845h22M1812 847h22M1792 859h14M1808 859h14M1824 859h14M1840 859h14M1821 865h12M1797 889h14M1799 911h23M1797 917h13M1804 939h2M1832 939h1M1855 939h4M1860 939h1M1797 945h23M1797 949h18M1808 957h2"/><path id="mmb" d="M1814 115h1M1815 115h1M1820 115h1M1815 121h1M1816 121h1M1821 121h1M1817 141h1M1839 141h1M1844 141h1M1783 161h1M1819 163h1M1851 163h1M1856 163h1M1818 175h1M1846 175h1M1851 175h1M1821 187h1M1848 187h1M1853 187h1M1812 203h1M1850 203h1M1855 203h1M1783 229h1M1820 233h1M1835 233h1M1840 233h1M1783 255h1M1815 261h1M1829 261h1M1834 261h1M1783 283h1M1810 291h1M1854 291h1M1859 291h1M1809 443h1M1826 443h1M1831 443h1M1783 467h1M1813 495h1M1818 579h1M1820 589h1M1839 589h1M1844 589h1M1783 599h1M1812 605h1M1836 605h1M1841 605h1M1783 617h1M1809 641h1M1821 641h1M1826 641h1M1820 649h1M1841 649h1M1846 649h1M1818 665h1M1823 665h1M1828 665h1M1821 677h1M1828 677h1M1833 677h1M1812 717h1M1824 717h1M1829 717h1M1811 781h1M1822 781h1M1827 781h1M1783 793h1M1814 799h1M1829 799h1M1834 799h1M1783 809h1M1819 813h1M1854 813h1M1859 813h1M1783 821h1M1815 829h1M1853 829h1M1858 829h1M1783 837h1M1813 889h1M1783 895h1M1798 911h1M1846 911h1M1803 939h1M1817 949h1M1818 949h1M1823 949h1M1783 965h1"/><path id="mmB" d="M1817 115h2M1818 121h2M1793 133h4M1841 141h2M1840 145h4M1791 147h3M1856 151h4M1853 163h2M1808 165h4M1848 175h2M1807 177h4M1819 177h4M1850 187h2M1830 189h4M1852 203h2M1814 221h5M1837 233h2M1829 237h4M1791 239h3M1847 241h4M1791 245h3M1791 247h3M1818 249h5M1791 251h3M1831 261h2M1818 265h5M1838 267h4M1855 267h4M1844 269h4M1791 279h3M1783 289h3M1856 291h2M1787 297h5M1787 359h5M1815 373h4M1827 373h4M1815 381h5M1822 381h5M1848 395h5M1783 409h3M1828 443h2M1803 445h4M1848 445h4M1854 445h5M1787 449h3M1835 451h5M1849 451h4M1787 455h5M1831 459h5M1809 461h4M1787 465h5M1813 483h5M1815 485h4M1835 503h4M1836 505h4M1838 513h4M1838 515h5M1838 517h4M1838 519h4M1838 521h4M1841 525h4M1841 527h5M1841 529h5M1857 533h4M1857 535h4M1857 537h4M1857 539h4M1857 541h4M1857 543h4M1857 545h4M1857 547h4M1842 551h4M1842 553h4M1842 555h5M1851 563h5M1851 565h5M1851 567h5M1832 581h5M1841 589h2M1787 591h3M1821 595h5M1838 605h2M1813 607h4M1787 615h3M1823 641h2M1787 643h3M1843 649h2M1820 653h4M1783 661h5M1825 665h2M1830 677h2M1826 717h2M1822 721h5M1833 735h5M1833 737h5M1833 739h4M1833 741h4M1833 743h5M1833 745h4M1834 757h5M1834 759h4M1834 761h5M1834 763h5M1834 765h4M1783 769h3M1795 769h4M1783 771h5M1783 773h3M1837 775h4M1824 781h2M1787 783h5M1815 787h5M1823 789h4M1829 789h4M1831 799h2M1851 801h5M1787 805h3M1856 813h2M1787 817h3M1855 829h2M1811 831h4M1840 841h5M1840 843h4M1840 845h4M1840 847h5M1783 859h3M1783 901h8M1783 927h8M1807 939h1M1834 939h1M1820 949h2M1804 951h5M1792 955h3M1804 963h4"/><path id="mmN" d="M1812 117h4M1811 123h4M1791 131h2M1860 145h1M1831 147h4M1838 151h4M1844 151h4M1850 151h4M1826 153h4M1845 157h4M1824 165h4M1812 169h4M1813 177h4M1832 177h4M1838 177h4M1811 179h4M1805 181h4M1813 189h4M1819 189h3M1824 189h4M1813 191h4M1816 193h4M1790 201h3M1794 205h3M1823 211h4M1829 211h4M1796 213h3M1796 215h3M1819 217h4M1811 219h4M1842 221h4M1808 227h2M1812 227h4M1835 237h4M1841 237h4M1830 239h4M1853 241h4M1842 243h4M1856 243h4M1832 247h4M1838 247h4M1836 249h4M1827 251h4M1837 271h4M1843 271h4M1852 275h4M1858 275h3M1845 279h4M1798 295h3M1800 297h3M1796 299h2M1803 301h7M1796 305h2M1806 307h7M1796 311h2M1805 313h7M1796 317h2M1803 319h7M1796 323h2M1803 325h7M1796 329h2M1806 331h7M1796 335h1M1803 337h7M1796 341h2M1806 343h6M1796 347h2M1803 349h7M1804 359h2M1858 359h3M1833 373h4M1829 381h4M1823 393h3M1842 395h4M1855 395h4M1815 397h4M1842 445h4M1809 447h4M1838 447h3M1843 447h4M1814 451h4M1829 451h4M1814 453h4M1847 453h4M1803 455h3M1814 457h4M1806 459h4M1812 459h3M1817 459h4M1815 461h4M1828 461h4M1834 513h2M1834 515h2M1834 517h2M1834 519h2M1834 521h2M1837 525h2M1837 527h2M1837 529h2M1853 533h2M1853 535h2M1853 537h2M1853 539h2M1853 541h2M1853 543h2M1853 545h2M1853 547h2M1838 551h2M1838 553h2M1838 555h2M1847 563h2M1847 565h2M1847 567h2M1845 581h4M1851 581h4M1857 581h4M1810 583h3M1835 583h4M1802 591h2M1836 595h4M1811 597h4M1825 597h4M1817 609h4M1823 609h4M1814 611h4M1820 611h4M1815 613h4M1826 653h4M1823 655h3M1798 661h2M1818 667h4M1824 667h4M1808 671h3M1817 679h4M1801 685h4M1812 693h4M1806 695h4M1815 697h4M1818 699h4M1810 719h4M1816 719h4M1822 719h4M1828 719h4M1816 721h4M1829 721h4M1848 721h4M1854 721h4M1860 721h1M1807 729h4M1829 735h2M1829 737h2M1829 739h2M1829 741h2M1829 743h2M1829 745h2M1830 757h2M1830 759h2M1830 761h2M1830 763h2M1830 765h2M1794 773h3M1824 775h4M1855 775h4M1846 785h4M1852 785h4M1858 785h3M1809 787h4M1822 787h4M1811 789h4M1817 789h4M1842 789h4M1842 791h4M1848 791h3M1853 791h4M1807 801h4M1827 801h4M1833 801h4M1839 801h4M1845 801h4M1858 801h3M1837 803h4M1795 807h3M1821 815h4M1806 833h4M1813 835h4M1836 841h2M1836 843h2M1836 845h2M1836 847h2M1809 867h2M1825 869h4M1837 869h4M1853 869h4M1827 875h4M1813 881h4M1825 883h4M1829 885h1M1800 955h1M1807 955h3"/><path id="mmC" d="M1783 129h2M1786 129h3M1790 129h6M1797 129h4M1802 129h3M1783 137h2M1786 137h5M1792 137h9M1802 137h8M1811 137h7M1819 137h9M1829 137h9M1839 137h7M1847 137h6M1854 137h5M1860 137h1M1791 511h2M1794 511h6M1801 511h6M1808 511h8M1791 559h2M1794 559h4M1799 559h8M1808 559h9M1783 633h2M1786 633h6M1793 633h4M1798 633h2M1801 633h9M1811 633h7M1819 633h4M1824 633h9M1834 633h2M1783 635h2M1786 635h6M1793 635h4M1798 635h7M1783 637h2M1786 637h8M1783 691h2M1786 691h2M1789 691h6M1796 691h6M1803 691h2M1806 691h3M1810 691h6M1817 691h3M1821 691h2M1783 733h2M1786 733h4M1791 733h6M1798 733h4M1803 733h8M1812 733h8M1783 747h2M1786 747h4M1783 751h2M1786 751h6M1783 755h2M1786 755h2M1789 755h8M1798 755h3M1802 755h4M1807 755h5M1813 755h7M1821 755h5M1783 767h2M1786 767h8M1795 767h4M1783 779h2M1786 779h5M1792 779h7M1800 779h2M1803 779h2M1806 779h8M1783 797h2M1786 797h6M1793 797h9M1803 797h2M1806 797h2M1783 853h2M1786 853h2M1789 853h3M1793 853h2M1796 853h3M1800 853h8M1809 853h7M1817 853h2M1820 853h5M1826 853h8M1835 853h8M1844 853h8M1853 853h5M1859 853h2M1783 855h2M1786 855h6M1793 855h2M1796 855h6M1803 855h8M1812 855h5M1818 855h5M1824 855h7M1832 855h5M1838 855h7M1846 855h8M1855 855h6M1783 899h11M1795 899h8M1787 903h2M1790 903h3M1794 903h2M1797 903h11M1809 903h7M1817 903h8M1826 903h5M1832 903h9M1842 903h7M1850 903h5M1856 903h4M1787 905h2M1790 905h6M1797 905h8M1806 905h6M1813 905h6M1820 905h1M1822 905h5M1828 905h8M1837 905h4M1842 905h4M1787 907h2M1790 907h5M1796 907h10M1807 907h3M1811 907h7M1819 907h3M1787 909h2M1790 909h6M1797 909h6M1804 909h1M1806 909h3M1810 909h3M1814 909h6M1821 909h8M1830 909h2M1833 909h6M1840 909h3M1844 909h8M1853 909h7M1783 921h7M1791 921h2M1794 921h6M1801 921h10M1812 921h10M1823 921h5M1829 921h8M1787 931h2M1790 931h3M1794 931h2M1797 931h6M1804 931h9M1814 931h3M1818 931h1M1820 931h7M1828 931h1M1830 931h4M1835 931h4M1840 931h7M1848 931h1M1850 931h8M1859 931h2M1787 933h2M1790 933h1M1792 933h2M1795 933h8M1804 933h3M1808 933h5M1814 933h10M1825 933h5M1831 933h25M1787 935h2M1790 935h2M1793 935h10M1804 935h3M1808 935h5M1814 935h7M1822 935h8M1831 935h3M1835 935h5M1841 935h9M1787 937h2M1790 937h6M1797 937h1M1799 937h7M1807 937h1M1809 937h4"/><path id="mmK" d="M1787 143h3M1791 151h2M1791 157h2M1789 159h5M1787 235h3M1791 241h2M1791 243h2M1789 253h5M1787 263h3M1791 267h2M1791 269h2M1791 271h2M1791 273h2M1791 275h2M1789 281h5M1791 299h4M1795 303h5M1791 305h4M1795 309h5M1791 311h4M1795 315h5M1791 317h4M1795 321h5M1791 323h4M1795 327h5M1791 329h4M1795 333h5M1791 335h4M1795 339h5M1791 341h4M1795 345h5M1791 347h4M1795 351h5M1787 363h2M1791 371h2M1791 379h4M1787 389h2M1787 479h2M1787 497h2M1791 561h2M1791 863h2M1795 867h2M1795 873h4M1787 891h2M1787 893h4M1787 955h3"/><path id="mmc" d="M1791 143h1M1787 159h1M1795 159h1M1797 159h1M1791 235h1M1787 253h1M1795 253h1M1797 253h1M1791 263h1M1787 281h1M1795 281h1M1797 281h1M1787 353h1M1787 357h1M1790 363h1M1806 363h1M1808 363h1M1794 371h1M1812 371h1M1814 371h1M1791 377h1M1796 379h1M1791 383h1M1787 385h1M1790 389h1M1808 389h1M1810 389h1M1787 403h1M1790 479h1M1810 479h1M1812 479h1M1787 487h1M1790 497h1M1794 561h1M1814 561h1M1816 561h1M1791 569h1M1787 571h1M1794 863h1M1811 863h1M1813 863h1M1798 867h1M1811 867h1M1813 867h1M1795 871h1M1800 873h1M1795 877h1M1791 879h1M1789 891h1M1794 891h1M1836 891h1M1821 893h1M1835 893h1M1808 939h1M1830 939h1M1835 939h1M1853 939h1M1803 951h1M1809 951h1M1791 955h1M1815 955h1M1817 955h1M1787 959h1M1803 963h1M1808 963h1"/><path id="mmL" d="M1783 925h10"/></defs><g fill="none" stroke-width="2"><use href="#mmV" stroke="#9cdcfe" stroke-opacity="0.3"/><use href="#mmV" stroke="#9cdcfe" stroke-opacity="0.19" stroke-dasharray="1 1 2 1 1 2 3 1 1 1"/><use href="#mmP" stroke="#d4d4d4" stroke-opacity="0.16"/><use href="#mmP" stroke="#d4d4d4" stroke-opacity="0.10" stroke-dasharray="1 1 2 1 1 2 3 1 1 1"/><use href="#mmF" stroke="#dcdcaa" stroke-opacity="0.29"/><use href="#mmF" stroke="#dcdcaa" stroke-opacity="0.18" stroke-dasharray="1 1 2 1 1 2 3 1 1 1"/><use href="#mma" stroke="#ffd700" stroke-opacity="0.12"/><use href="#mma" stroke="#ffd700" stroke-opacity="0.07" stroke-dasharray="1 1 2 1 1 2 3 1 1 1"/><use href="#mmS" stroke="#ce9178" stroke-opacity="0.26"/><use href="#mmS" stroke="#ce9178" stroke-opacity="0.16" stroke-dasharray="1 1 2 1 1 2 3 1 1 1"/><use href="#mmb" stroke="#da70d6" stroke-opacity="0.12"/><use href="#mmb" stroke="#da70d6" stroke-opacity="0.07" stroke-dasharray="1 1 2 1 1 2 3 1 1 1"/><use href="#mmB" stroke="#569cd6" stroke-opacity="0.32"/><use href="#mmB" stroke="#569cd6" stroke-opacity="0.20" stroke-dasharray="1 1 2 1 1 2 3 1 1 1"/><use href="#mmN" stroke="#b5cea8" stroke-opacity="0.29"/><use href="#mmN" stroke="#b5cea8" stroke-opacity="0.18" stroke-dasharray="1 1 2 1 1 2 3 1 1 1"/><use href="#mmC" stroke="#6a9955" stroke-opacity="0.3"/><use href="#mmC" stroke="#6a9955" stroke-opacity="0.19" stroke-dasharray="1 1 2 1 1 2 3 1 1 1"/><use href="#mmK" stroke="#c586c0" stroke-opacity="0.32"/><use href="#mmK" stroke="#c586c0" stroke-opacity="0.20" stroke-dasharray="1 1 2 1 1 2 3 1 1 1"/><use href="#mmc" stroke="#179fff" stroke-opacity="0.12"/><use href="#mmc" stroke="#179fff" stroke-opacity="0.07" stroke-dasharray="1 1 2 1 1 2 3 1 1 1"/><use href="#mmL" stroke="#bcbcbc" stroke-opacity="0.28"/><use href="#mmL" stroke="#bcbcbc" stroke-opacity="0.17" stroke-dasharray="1 1 2 1 1 2 3 1 1 1"/></g>
</svg>
<div class="r" style="left:0px;top:1018px;width:113px;height:22px;background:#003d66;"></div>
<svg class="r" style="left:0px;top:1022px;" width="13" height="14" viewBox="0 0 13 14"><g fill="none" stroke="#fff" stroke-width="1.2"><path d="M6 1.200c1.700 1.100 3.300 1.600 5.200 1.700v3.600c0 3-2.200 5.200-5.200 6.500c-3-1.300-5.200-3.500-5.200-6.500V2.900C2.700 2.800 4.300 2.300 6 1.200z"/></g><circle cx="6" cy="5.800" r="1.300" fill="#fff"/><path d="M6 6.500v3" stroke="#fff" stroke-width="1.300"/></svg>
<span class="t" style="left:16.70px;top:1022px;font-size:11.6px;line-height:15px;color:#fff;letter-spacing:0.132px;">Restricted Mode</span>
<svg class="r" style="left:121.5px;top:1022.5px;" width="13" height="13" viewBox="0 0 13 13"><g fill="none" stroke="#fff" stroke-width="1.050"><circle cx="6.500" cy="6.500" r="5.700"/><path d="M4.200 4.200l4.600 4.600 M8.800 4.200l-4.600 4.600"/></g></svg>
<span class="t" style="left:138.80px;top:1022px;font-size:11.6px;line-height:15px;color:#fff;">0</span>
<svg class="r" style="left:148.5px;top:1022.5px;" width="14" height="13" viewBox="0 0 14 13"><g fill="none" stroke="#fff" stroke-width="1.050" stroke-linejoin="round"><path d="M7 1.300L12.800 12H1.200z"/><path d="M7 5v3.800 M7 9.800v1.200"/></g></svg>
<span class="t" style="left:165.80px;top:1022px;font-size:11.6px;line-height:15px;color:#fff;">0</span>
<span class="t" style="left:1477.80px;top:1022px;font-size:11.6px;line-height:15px;color:#fff;letter-spacing:-0.120px;">Ln 755, Col 50</span>
<span class="t" style="left:1567.70px;top:1022px;font-size:11.6px;line-height:15px;color:#fff;letter-spacing:-0.311px;">Spaces: 4</span>
<span class="t" style="left:1633.00px;top:1022px;font-size:11.6px;line-height:15px;color:#fff;letter-spacing:0.026px;">UTF-8 with BOM</span>
<span class="t" style="left:1736.80px;top:1022px;font-size:11.6px;line-height:15px;color:#fff;letter-spacing:-2.637px;">LF</span>
<span class="t" style="left:1763.50px;top:1021px;font-size:11.6px;line-height:15px;color:#fff;letter-spacing:3.052px;">{}</span>
<span class="t" style="left:1781.80px;top:1022px;font-size:11.6px;line-height:15px;color:#fff;letter-spacing:-0.239px;">JavaScript</span>
<svg class="r" style="left:1850px;top:1021px;" width="14" height="16" viewBox="0 0 14 16"><g fill="none" stroke="#fff" stroke-width="1.100"><circle cx="5" cy="6.500" r="2.300"/><path d="M1 14.500c.3-3 1.800-4.300 4-4.300s3.700 1.300 4 4.300"/><path d="M6 2.500h7.500v6h-3"/></g></svg>
<svg class="r" style="left:0;top:0;" width="1861" height="1079" viewBox="0 0 1861 1079"><defs><linearGradient id="wmg2" gradientUnits="userSpaceOnUse" x1="1383" x2="1936" y1="0" y2="0"><stop offset="0" stop-color="#6f78f8"/><stop offset=".5" stop-color="#8a86f8"/><stop offset="1" stop-color="#c6a0fa"/></linearGradient><filter id="wmf" filterUnits="userSpaceOnUse" x="1300" y="900" width="700" height="179"><feMorphology in="SourceAlpha" operator="dilate" radius="1.250" result="d"/><feFlood flood-color="#dcdcdc"/><feComposite in2="d" operator="in" result="o"/><feMerge><feMergeNode in="o"/><feMergeNode in="SourceGraphic"/></feMerge></filter><clipPath id="wmc"><rect x="0" y="0" width="2000" height="1034.500"/></clipPath></defs><g clip-path="url(#wmc)"><g opacity=".33" transform="scale(0.94,1)" font-family="Liberation Sans, sans-serif" font-weight="700" font-size="97.0"><text x="1386.2 1424.8 1480.5 1541.2 1599.3 1685.6 1747.1 1776.1 1837.4 1873.1" y="1014.8" filter="url(#wmf)" fill="url(#wmg2)" stroke="url(#wmg2)" stroke-width="3" stroke-linejoin="round">ragemp.pro</text></g></g></svg>
<div class="r" style="left:332px;top:1040px;width:48px;height:39px;background:#4e4e4e;"></div>
<div class="r" style="left:189px;top:1077px;width:40px;height:2px;background:#82bfee;"></div>
<div class="r" style="left:238px;top:1077px;width:40px;height:2px;background:#82bfee;"></div>
<div class="r" style="left:287px;top:1077px;width:40px;height:2px;background:#82bfee;"></div>
<div class="r" style="left:385px;top:1077px;width:40px;height:2px;background:#82bfee;"></div>
<div class="r" style="left:434px;top:1077px;width:40px;height:2px;background:#82bfee;"></div>
<div class="r" style="left:483px;top:1077px;width:40px;height:2px;background:#82bfee;"></div>
<div class="r" style="left:332px;top:1077px;width:48px;height:2px;background:#9ccbf2;"></div>
<svg class="r" style="left:5px;top:1051.5px;" width="17" height="17" viewBox="0 0 17 17"><g fill="#fff"><path d="M0 2.400L6.900 1.450V8H0z M7.700 1.350L16.500 0V8H7.700z M0 8.800H6.900V15.350L0 14.400z M7.700 8.800H16.500V16.800L7.700 15.450z"/></g></svg>
<svg class="r" style="left:52px;top:1051.5px;" width="18" height="17" viewBox="0 0 18 17"><g fill="none" stroke="#fff" stroke-width="1.300"><circle cx="11.600" cy="6" r="5.100"/><path d="M8.200 9.800L1.200 16.200"/></g></svg>
<svg class="r" style="left:100px;top:1051px;" width="18" height="17" viewBox="0 0 18 17"><g fill="none" stroke="#fff" stroke-width="1.200"><rect x="1.400" y="5.600" width="10.200" height="6.600"/><path d="M1.400 1v2.200h10.200V1 M1.400 16.200V14h10.200v2.200"/><path d="M15.500 1V16.200" stroke-width="1.100"/></g><rect x="14.200" y="5" width="2.600" height="3.400" fill="#fff"/></svg>
<svg class="r" style="left:148.5px;top:1047px;overflow:visible;" width="24" height="24" viewBox="0 0 24 24"><defs><linearGradient id="ieg" x1="0" y1="0" x2="0" y2="1"><stop offset="0" stop-color="#7fdcff"/><stop offset="1" stop-color="#1a8ad8"/></linearGradient></defs><circle cx="12.500" cy="13" r="7.500" fill="none" stroke="url(#ieg)" stroke-width="5"/><path d="M12.500 14.300H23V19.200L18.500 17.300L12.500 17.800z" fill="#0a0a0a"/><rect x="5.500" y="11" width="15.800" height="3.200" fill="#39b3ee"/><path d="M22.500 3.600C20.500 -.5 11 3 5.500 9.500C1 15 -.500 21.500 3.500 22.800" fill="none" stroke="#f3c013" stroke-width="1.900"/><path d="M3.500 22.800C5.500 23.400 7.500 22.600 9 21.700" fill="none" stroke="#c89a0c" stroke-width="1.500"/></svg>
<svg class="r" style="left:198px;top:1050.5px;" width="22" height="19" viewBox="0 0 22 19"><path d="M0 1C0 .4 .4 0 1 0H7.800L9.300 1.800H20.800c.6 0 1 .4 1 1V17.800H0z" fill="#e9b840"/><path d="M0 2.300H8.500L9.300 1.800H21.800V17.800H0z" fill="#fbe197"/><path d="M1.300 .9H6.300" stroke="#8fd0f0" stroke-width="1"/><path d="M3.700 10.400H18V18.600H14V13.400H8.300V18.600H3.700z" fill="#2e9be6"/></svg>
<svg class="r" style="left:246.5px;top:1048.8px;" width="23" height="22" viewBox="0 0 23 22"><defs><linearGradient id="opg" x1="0" y1="0" x2="1" y2="0"><stop offset="0" stop-color="#ff1b2d"/><stop offset=".6" stop-color="#ff1b2d"/><stop offset="1" stop-color="#b3091c"/></linearGradient></defs><ellipse cx="11.300" cy="11" rx="11.200" ry="10.900" fill="url(#opg)"/><ellipse cx="11.800" cy="10.800" rx="5.600" ry="8" fill="#0a0a0a"/></svg>
<svg class="r" style="left:295px;top:1048.5px;" width="24" height="23" viewBox="0 0 24 23"><defs><linearGradient id="xag" x1="0" y1="0" x2="0" y2="1"><stop offset="0" stop-color="#fb9a55"/><stop offset=".25" stop-color="#f87c26"/><stop offset="1" stop-color="#e86f1c"/></linearGradient></defs><rect width="23.600" height="22.800" rx="3" fill="url(#xag)"/><g fill="#fff"><circle cx="7.600" cy="7.300" r="3.500"/><circle cx="16" cy="7.300" r="3.500"/><circle cx="7.600" cy="15.500" r="3.500"/><circle cx="16" cy="15.500" r="3.500"/><rect x="6" y="7" width="11.600" height="8.800"/></g><g fill="#f47a25"><circle cx="7.400" cy="7.300" r="1.100"/><circle cx="16.200" cy="7.300" r="1.100"/><circle cx="7.400" cy="15.500" r="1.100"/><circle cx="16.200" cy="15.500" r="1.100"/><path d="M9.600 3.500L11.800 6.600L14 3.500z M9.600 19.300L11.800 16.200L14 19.300z M3.500 9.500L6 11.400L3.500 13.300z M20.100 9.500L17.600 11.400L20.100 13.300z"/><rect x="8.400" y="10.600" width="6.800" height="1.600" rx=".8"/></g></svg>
<svg class="r" style="left:343.8px;top:1047.7px;" width="24.5" height="24.5" viewBox="0 0 100 100"><path d="M74 4 L98 16 L98 84 L74 96 Z" fill="#25aaf3"/><path d="M74 4 L27 50 L74 96 L74 71 L50 50 L74 29 Z" fill="#0f82d2"/><path d="M35 43 L13 26 L2 32 L21 50 L2 68 L13 74 L35 57 Z" fill="#0b74c4"/></svg>
<svg class="r" style="left:392.8px;top:1047.7px;" width="24.5" height="24.5" viewBox="0 0 100 100"><path d="M72 4 L98 16 L98 84 L72 96 Z" fill="#d5a8fb"/><path d="M72 4 L24 50 L72 96 L72 70 L47 50 L72 30 Z" fill="#7e55bf"/><path d="M2 30 L12 25 L72 72 L72 96 L12 48 Z" fill="#a57be0"/><path d="M2 30v40l10 5V25z" fill="#6d42b0"/><path d="M12 75 L38 53 L28 45 L12 58z" fill="#8c62cc"/></svg>
<svg class="r" style="left:443.5px;top:1047.5px;" width="22" height="24" viewBox="0 0 22 24"><g fill="none"><path d="M17.500 6.300A7.300 7.300 0 1 0 12 18.200" stroke="#55b85a" stroke-width="4.600" stroke-opacity=".92"/><path d="M13 .8L20.300 5.200L14 9.600z" fill="#55b85a"/><path d="M8.500 17.300C10.500 18.300 12.500 17.600 14 16.500" stroke="#d8603a" stroke-width="3.400"/><path d="M12.500 11.800L19.300 17.200L11.800 22.800z" fill="#e4572f"/></g></svg>
<div class="r" style="left:491px;top:1048px;width:24px;height:24px;background:#1c1c1c;"></div>
<svg class="r" style="left:491px;top:1048px;" width="24" height="24" viewBox="0 0 24 24"><path d="M6.300 8.200H15.200L16.600 9.800L15.200 12H6.300 M11 12L16.500 16.300" fill="none" stroke="#f6c62d" stroke-width="2.100" stroke-linejoin="round"/></svg>
<svg class="r" style="left:1660px;top:1044px;" width="100" height="32" viewBox="1660 1044 100 32"><g fill="none" stroke="#fff" stroke-width="1.250"><path d="M1666.300 1062.600L1672 1056.800L1677.700 1062.600"/><path d="M1688.700 1055.200L1703.200 1053V1066.700L1688.700 1065.100z"/><path d="M1692.500 1062.500c.3-2.600 2-4.300 4.800-4.500 M1695.300 1056.300l2.400 1.700l-2 2.100" stroke-width="1.100"/><rect x="1715.300" y="1055" width="11.800" height="8.200"/><path d="M1720.500 1063.200v3.100 M1716.500 1066.400h7.500"/><rect x="1712.400" y="1054.900" width="3.400" height="3.600" fill="#0a0a0b"/><path d="M1714.300 1058.500v8.200 M1713.200 1056.300l.9 .9l.9-.9" stroke-width="1"/><path d="M1736.900 1058.300h1.900l2.500-3.300v10.300l-2.500-3h-1.900z" stroke-linejoin="round" stroke-width="1.150"/></g><circle cx="1699.400" cy="1063.400" r="4.400" fill="#e81123"/><path d="M1699.400 1060.600v3.300 M1699.400 1065v1.200" stroke="#fff" stroke-width="1.300"/><circle cx="1747.500" cy="1063.400" r="4.500" fill="#e81123"/><path d="M1745.400 1061.300l4.200 4.200 M1749.600 1061.300l-4.200 4.200" stroke="#fff" stroke-width="1.250"/></svg>
<span class="t" style="left:1762.70px;top:1052px;font-size:11.6px;line-height:15px;color:#ffffff;letter-spacing:-1.569px;">ENG</span>
<span class="t" style="left:1801.00px;top:1043px;font-size:11.6px;line-height:15px;color:#ffffff;letter-spacing:-0.256px;">11:12 PM</span>
<span class="t" style="left:1799.30px;top:1061px;font-size:11.6px;line-height:15px;color:#ffffff;letter-spacing:-0.201px;">1/30/2023</span>
</div></body></html>
